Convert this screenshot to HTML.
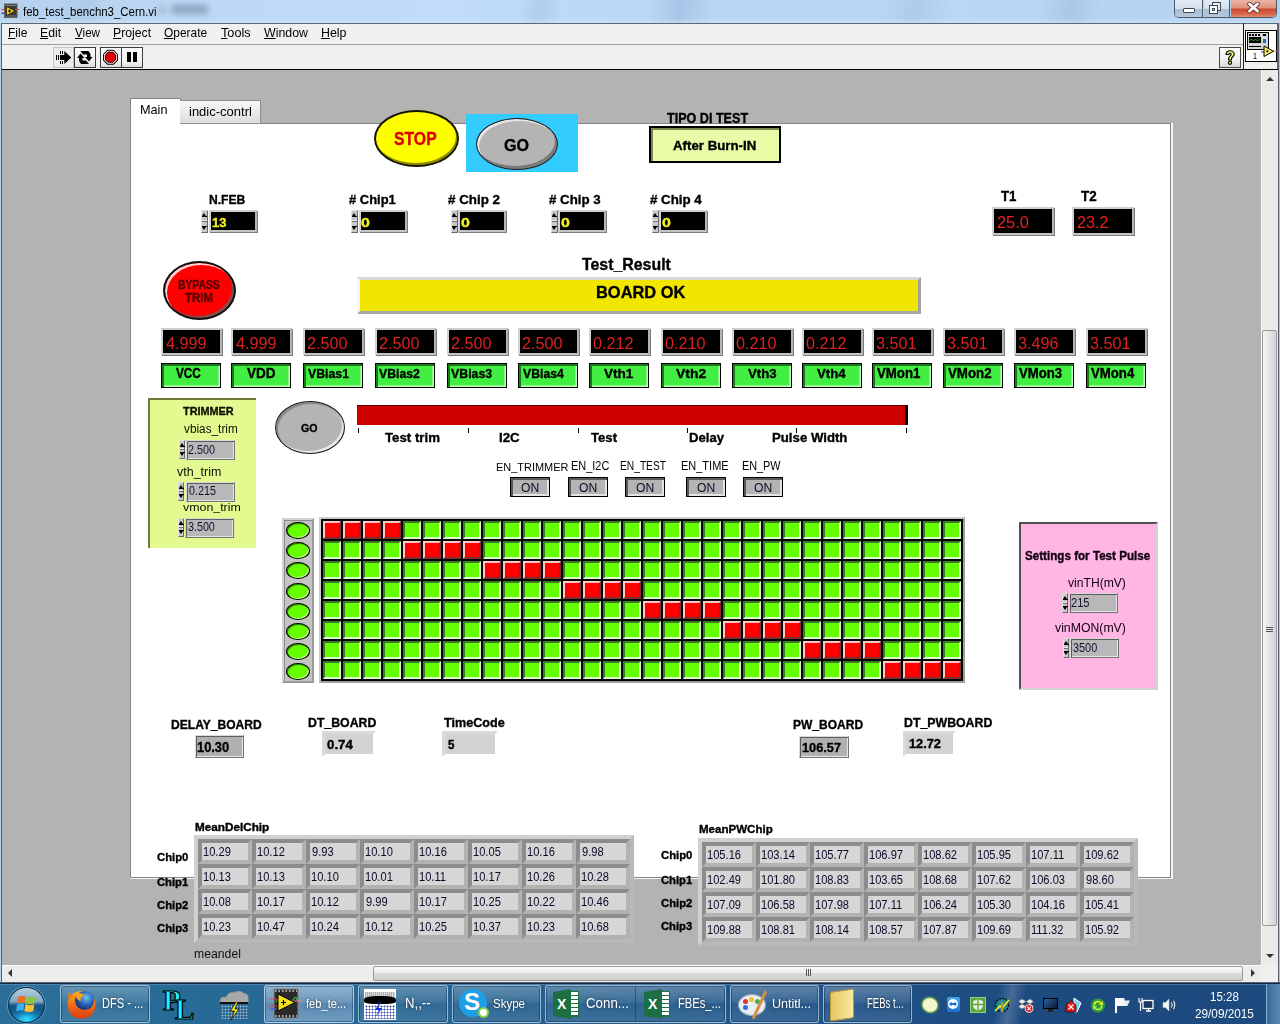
<!DOCTYPE html><html><head><meta charset="utf-8"><style>
*{box-sizing:border-box;margin:0;padding:0}
html,body{width:1280px;height:1024px;overflow:hidden;background:#b3b3b3;font-family:"Liberation Sans",sans-serif;}
.a{position:absolute}
.b{font-weight:bold}
.t{white-space:nowrap;line-height:1}
</style></head><body>
<div class="a" style="left:0px;top:0px;width:1280px;height:23px;background:linear-gradient(90deg,#b4d0ec 0%,#bcd8f4 15%,#c0dcf8 35%,#b8d6f4 55%,#bad8f6 75%,#b4d2f0 100%)"></div>
<div class="a" style="left:520px;top:0;width:40px;height:23px;background:linear-gradient(100deg,transparent 0%,rgba(60,100,150,0.1) 50%,transparent 100%)"></div>
<div class="a" style="left:650px;top:0;width:60px;height:23px;background:linear-gradient(100deg,transparent 0%,rgba(60,100,150,0.14) 50%,transparent 100%)"></div>
<div class="a" style="left:880px;top:0;width:70px;height:23px;background:linear-gradient(100deg,transparent 0%,rgba(60,100,150,0.1) 50%,transparent 100%)"></div>
<div class="a" style="left:1040px;top:0;width:60px;height:23px;background:linear-gradient(100deg,transparent 0%,rgba(60,100,150,0.12) 50%,transparent 100%)"></div>
<div class="a" style="left:60px;top:0;width:50px;height:23px;background:linear-gradient(100deg,transparent 0%,rgba(60,100,150,0.08) 50%,transparent 100%)"></div>
<div class="a" style="left:0px;top:18px;width:1280px;height:5px;background:linear-gradient(rgba(255,255,255,0),rgba(220,235,250,.45))"></div>
<div class="a" style="left:0px;top:23px;width:2px;height:961px;background:#b9d3ee;border-right:1px solid #56606c"></div>
<div class="a" style="left:1278px;top:23px;width:2px;height:961px;background:#a9c5e2;border-left:1px solid #56606c"></div>
<div class="a" style="left:0px;top:982px;width:1280px;height:2px;background:#a9c5e2;border-top:1px solid #56606c"></div>
<svg class="a" style="left:1px;top:3px" width="18" height="16" viewBox="0 0 18 16"><rect x="3.5" y="1" width="12.5" height="13.5" fill="#3a3a3a" stroke="#606060" stroke-width="1"/><path d="M4.5 2.5H15M4.5 13H15" stroke="#bbb" stroke-width="1" stroke-dasharray="1 1"/><path d="M0.5 6.5H5M0.5 10H5" stroke="#e03030" stroke-width="1.1"/><path d="M0.5 10.5H4" stroke="#3050d0" stroke-width="1.1"/><path d="M14 6.5H18" stroke="#e04040" stroke-width="1"/><path d="M5.5 3.5L14 8L5.5 12.5Z" fill="#f0d020" stroke="#000" stroke-width=".6"/><path d="M7 8H10M8.5 6.5V9.5" stroke="#000" stroke-width=".9"/></svg>
<div class="a t" style="left:23.23px;top:6.00px;font-size:12.83px;color:#000;transform:scaleX(0.892);transform-origin:0 0;">feb_test_benchn3_Cern.vi</div>
<div class="a" style="left:1174px;top:0px;width:103px;height:18px;border:1px solid #4a5868;border-top:none;border-radius:0 0 5px 5px;overflow:hidden"><div class="a" style="left:0;top:0;width:28px;height:17px;background:linear-gradient(#e4ecf4 0%,#d4e0ec 50%,#a8bed4 52%,#b4c8dc 100%);border-right:1px solid #4a5868"></div><div class="a" style="left:29px;top:0;width:26px;height:17px;background:linear-gradient(#e4ecf4 0%,#d4e0ec 50%,#a8bed4 52%,#b4c8dc 100%);border-right:1px solid #4a5868"></div><div class="a" style="left:56px;top:0;width:47px;height:17px;background:linear-gradient(#eab4a4 0%,#e0907c 48%,#c84830 52%,#d86a50 85%,#e89078 100%)"></div></div>
<div class="a" style="left:1183px;top:8px;width:12px;height:5px;background:#fff;border:1px solid #3a4858;border-radius:1px"></div>
<div class="a" style="left:1212px;top:2px;width:9px;height:9px;background:#e8eef4;border:1px solid #3a4858"></div>
<div class="a" style="left:1209px;top:5px;width:9px;height:9px;background:#fff;border:1px solid #3a4858"><div class="a" style="left:2px;top:2px;width:3px;height:3px;border:1px solid #3a4858"></div></div>
<svg class="a" style="left:1247px;top:2px" width="13" height="11" viewBox="0 0 13 11"><path d="M2.5 2L10.5 9M10.5 2L2.5 9" stroke="#6a3a30" stroke-width="4.6" stroke-linecap="round"/><path d="M2.5 2L10.5 9M10.5 2L2.5 9" stroke="#fff" stroke-width="2.8" stroke-linecap="round"/></svg>
<div class="a" style="left:172px;top:5px;width:36px;height:9px;background:#7e98b4;filter:blur(3px);opacity:.8"></div>
<div class="a" style="left:158px;top:6px;width:8px;height:8px;background:#90a8c0;filter:blur(3px);opacity:.6"></div>
<div class="a" style="left:2px;top:23px;width:1276px;height:22px;background:#f0f0f0;border-top:1px solid #5b6878"></div>
<div class="a t" style="left:8.44px;top:27.00px;font-size:12.14px;color:#000;transform:scaleX(0.988);transform-origin:0 0;"><u style="text-underline-offset:1px">F</u>ile</div>
<div class="a t" style="left:40.02px;top:27.00px;font-size:12.14px;color:#000;transform:scaleX(1.008);transform-origin:0 0;"><u style="text-underline-offset:1px">E</u>dit</div>
<div class="a t" style="left:74.94px;top:27.00px;font-size:12.14px;color:#000;transform:scaleX(0.960);transform-origin:0 0;"><u style="text-underline-offset:1px">V</u>iew</div>
<div class="a t" style="left:113.02px;top:27.00px;font-size:12.14px;color:#000;transform:scaleX(1.008);transform-origin:0 0;"><u style="text-underline-offset:1px">P</u>roject</div>
<div class="a t" style="left:164.46px;top:27.00px;font-size:12.57px;color:#000;transform:scaleX(0.949);transform-origin:0 0;"><u style="text-underline-offset:1px">O</u>perate</div>
<div class="a t" style="left:220.75px;top:27.00px;font-size:12.14px;color:#000;transform:scaleX(1.048);transform-origin:0 0;"><u style="text-underline-offset:1px">T</u>ools</div>
<div class="a t" style="left:263.94px;top:27.00px;font-size:12.14px;color:#000;transform:scaleX(1.020);transform-origin:0 0;"><u style="text-underline-offset:1px">W</u>indow</div>
<div class="a t" style="left:321.01px;top:27.00px;font-size:12.14px;color:#000;transform:scaleX(1.022);transform-origin:0 0;"><u style="text-underline-offset:1px">H</u>elp</div>
<div class="a" style="left:2px;top:44px;width:1241px;height:1px;background:#a0a0a0"></div>
<div class="a" style="left:2px;top:45px;width:1241px;height:24px;background:#f0f0f0"></div>
<div class="a" style="left:1243px;top:23px;width:1px;height:46px;background:#1a1a1a"></div>
<div class="a" style="left:1244px;top:23px;width:34px;height:46px;background:#f0f0f0;border-top:1px solid #5b6878;border-right:1px solid #5b6878"></div>
<div class="a" style="left:2px;top:69px;width:1276px;height:1px;background:#000"></div>
<div class="a" style="left:53px;top:47px;width:21px;height:21px;background:#ececec;border:1px solid #c4c4c4"></div>
<svg class="a" style="left:53px;top:47px" width="21" height="21" viewBox="0 0 21 21"><g fill="#000"><rect x="3" y="8" width="1" height="5"/><rect x="5" y="8" width="1" height="5"/><rect x="7" y="4" width="1" height="3"/><rect x="9" y="4" width="1" height="3"/><rect x="7" y="14" width="1" height="3"/><rect x="9" y="14" width="1" height="3"/><rect x="7" y="8" width="5" height="5"/><path d="M11.3 4L18.2 10.5L11.3 17Z"/></g></svg>
<div class="a" style="left:74px;top:47px;width:22px;height:21px;background:linear-gradient(#fafafa,#f0f0f0 70%,#dcdcdc);border:1px solid #3c3c3c"></div>
<svg class="a" style="left:74px;top:47px" width="22" height="21" viewBox="0 0 22 21"><g fill="#000"><path d="M6.5 4L14.5 4L16.5 7L16.5 10L18.5 10L15 14.5L11 10L13 10L13 7.5L9 7.5Z"/><path d="M15 17L7 17L5 14L5 11L3 11L6.5 6.5L10.5 11L8.5 11L8.5 13.5L12 13.5Z"/></g></svg>
<div class="a" style="left:100px;top:47px;width:22px;height:21px;background:linear-gradient(#fafafa,#f2f2f2 70%,#dedede);border:1px solid #3c3c3c"></div>
<svg class="a" style="left:100px;top:47px" width="22" height="21" viewBox="0 0 22 21"><path d="M17.98 13.40 L13.60 17.78 L7.40 17.78 L3.02 13.40 L3.02 7.20 L7.40 2.82 L13.60 2.82 L17.98 7.20Z" fill="#000"/><path d="M17.06 13.02 L13.22 16.86 L7.78 16.86 L3.94 13.02 L3.94 7.58 L7.78 3.74 L13.22 3.74 L17.06 7.58Z" fill="#f4e4e4"/><path d="M16.04 12.60 L12.80 15.84 L8.20 15.84 L4.96 12.60 L4.96 8.00 L8.20 4.76 L12.80 4.76 L16.04 8.00Z" fill="#300000"/><path d="M15.12 12.21 L12.41 14.92 L8.59 14.92 L5.88 12.21 L5.88 8.39 L8.59 5.68 L12.41 5.68 L15.12 8.39Z" fill="#e80000"/></svg>
<div class="a" style="left:121px;top:47px;width:22px;height:21px;background:linear-gradient(#fafafa,#f2f2f2 70%,#dedede);border:1px solid #3c3c3c"></div>
<div class="a" style="left:127px;top:52px;width:4px;height:10px;background:#000"></div>
<div class="a" style="left:133px;top:52px;width:4px;height:10px;background:#000"></div>
<div class="a" style="left:1219px;top:47px;width:22px;height:21px;background:linear-gradient(#fcfcfc,#f0f0f0 60%,#d8d8d8);border:1px solid #4a4a4a"></div>
<svg class="a" style="left:1223px;top:49px" width="14" height="17" viewBox="0 0 14 17"><path d="M3 5.5C3 3 5 1.8 7 1.8S11.2 3 11.2 5.2C11.2 7.4 8.4 8 8.4 10.3V11H5.6V10C5.6 7.3 8.2 6.8 8.2 5.3C8.2 4.5 7.7 4.2 7 4.2S5.8 4.6 5.8 5.5Z" fill="#f4f070" stroke="#000" stroke-width="1.1"/><circle cx="7" cy="13.8" r="1.6" fill="#f4f070" stroke="#000" stroke-width="1.1"/></svg>
<div class="a" style="left:1245px;top:30px;width:32px;height:32px;background:#fff;border:1px solid #000"></div>
<div class="a" style="left:1247px;top:32px;width:22px;height:18px;background:#d4d4d4;border:1px solid #000"></div>
<div class="a" style="left:1249px;top:34px;width:12px;height:2px;background:repeating-linear-gradient(90deg,#000 0 2px,transparent 2px 3px)"></div>
<div class="a" style="left:1263px;top:34px;width:3px;height:2px;background:#000"></div>
<div class="a" style="left:1249px;top:37px;width:12px;height:6px;background:#000"></div>
<svg class="a" style="left:1249px;top:37px" width="12" height="6" viewBox="0 0 12 6"><path d="M0.5 4L2.5 2L4.5 4L6.5 2L8.5 4L10.5 2" stroke="#30c030" stroke-width="0.9" fill="none"/></svg>
<div class="a" style="left:1263px;top:37px;width:3px;height:6px;background:#1a70d0;border-top:2px solid #e0e0e0"></div>
<div class="a" style="left:1249px;top:46px;width:12px;height:1px;background:#000"></div>
<div class="a t" style="left:1253.17px;top:51.00px;font-size:9.57px;color:#000;transform:scaleX(0.745);transform-origin:0 0;">1</div>
<svg class="a" style="left:1261px;top:45px" width="16" height="13" viewBox="0 0 16 13"><path d="M0 7H4" stroke="#2040c0" stroke-width="1"/><path d="M12 6H16" stroke="#d08060" stroke-width="1"/><path d="M3 1L12.5 6.3L3 11.5Z" fill="#f4f060" stroke="#000" stroke-width="1"/><circle cx="6.3" cy="6.3" r="1" fill="#000"/></svg>
<div class="a" style="left:1261px;top:70px;width:17px;height:895px;background:#eaeaea;border-left:1px solid #f8f8f8"></div>
<div class="a" style="left:1262px;top:330px;width:15px;height:596px;background:linear-gradient(90deg,#f6f6f6,#e2e2e2 60%,#cfcfd4);border:1px solid #9a9a9a;border-radius:2px"></div>
<div class="a" style="left:1266px;top:627px;width:7px;height:1px;background:#555;box-shadow:0 2px 0 #555,0 4px 0 #555"></div>
<div class="a" style="left:1266px;top:77px;width:0;height:0;border-left:4px solid transparent;border-right:4px solid transparent;border-bottom:4px solid #333"></div>
<div class="a" style="left:1266px;top:954px;width:0;height:0;border-left:4px solid transparent;border-right:4px solid transparent;border-top:4px solid #333"></div>
<div class="a" style="left:2px;top:965px;width:1259px;height:17px;background:#ececec;border-top:1px solid #fafafa"></div>
<div class="a" style="left:1261px;top:965px;width:17px;height:17px;background:#efefef"></div>
<div class="a" style="left:373px;top:966px;width:870px;height:15px;background:linear-gradient(#f8f8f8,#ededed 45%,#dadada 50%,#cfcfcf);border:1px solid #9a9a9a;border-radius:2px"></div>
<div class="a" style="left:806px;top:969px;width:1px;height:7px;background:#555;box-shadow:2px 0 0 #555,4px 0 0 #555"></div>
<div class="a" style="left:8px;top:969px;width:0;height:0;border-top:4px solid transparent;border-bottom:4px solid transparent;border-right:4px solid #333"></div>
<div class="a" style="left:1251px;top:969px;width:0;height:0;border-top:4px solid transparent;border-bottom:4px solid transparent;border-left:4px solid #333"></div>
<div class="a" style="left:0px;top:984px;width:1280px;height:40px;background:linear-gradient(#3a6f99,#245a85 50%,#1f5079)"></div>
<div class="a" style="left:130px;top:123px;width:1041px;height:755px;background:#fff;border:1px solid #858585"></div>
<div class="a" style="left:1171px;top:123px;width:2px;height:756px;background:#f4f4f4"></div>
<div class="a" style="left:130px;top:878px;width:1043px;height:1px;background:#f4f4f4"></div>
<div class="a" style="left:130px;top:98px;width:51px;height:26px;background:#fff;border:1px solid #858585;border-bottom:none"></div>
<div class="a t" style="left:139.69px;top:104.00px;font-size:12.34px;color:#000;transform:scaleX(1.027);transform-origin:0 0;">Main</div>
<div class="a" style="left:180px;top:100px;width:81px;height:24px;background:linear-gradient(#f6f6f6,#ececec 50%,#dcdcdc);border:1px solid #909090;border-left:none"></div>
<div class="a t" style="left:188.65px;top:106.00px;font-size:12.28px;color:#000;transform:scaleX(1.060);transform-origin:0 0;">indic-contrl</div>
<div class="a" style="left:374px;top:110px;width:85px;height:57px;border-radius:50%;background:#ffff00;border:2px solid #141400;box-shadow:inset -1px -2px 0 #8a8a00"></div>
<div class="a t" style="left:394.23px;top:131.00px;font-size:17.43px;font-weight:bold;-webkit-text-stroke:0.35px #e00000;color:#e00000;transform:scaleX(0.905);transform-origin:0 0;">STOP</div>
<div class="a" style="left:466px;top:114px;width:112px;height:58px;background:#33ccff"></div>
<div class="a" style="left:476px;top:118px;width:82px;height:52px;border-radius:50%;background:#b4b4b4;border:1.5px solid #1a1a1a;box-shadow:inset 2px 2px 0 #e8e8e8,inset -2px -3px 0 #7a7a7a"></div>
<div class="a t" style="left:504.11px;top:138.00px;font-size:16.00px;font-weight:bold;-webkit-text-stroke:0.35px #000;color:#000;transform:scaleX(1.006);transform-origin:0 0;">GO</div>
<div class="a t" style="left:667.37px;top:112.00px;font-size:13.71px;font-weight:bold;-webkit-text-stroke:0.35px #000;color:#000;transform:scaleX(0.918);transform-origin:0 0;">TIPO DI TEST</div>
<div class="a" style="left:649px;top:126px;width:132px;height:37px;background:#e8fca8;border:2px solid #000;box-shadow:inset 2px 2px 0 #7d8a50"></div>
<div class="a t" style="left:673.07px;top:139.00px;font-size:13.38px;font-weight:bold;-webkit-text-stroke:0.35px #000;color:#000;transform:scaleX(0.992);transform-origin:0 0;">After Burn-IN</div>
<div class="a t" style="left:209.01px;top:193.00px;font-size:13.48px;font-weight:bold;-webkit-text-stroke:0.35px #000;color:#000;transform:scaleX(0.899);transform-origin:0 0;">N.FEB</div>
<div class="a" style="left:201px;top:210px;width:7px;height:23px;background:#c8c8c8;border-style:solid;border-width:1px;border-color:#e0e0e0 #6a6a6a #6a6a6a #e0e0e0"></div>
<div class="a" style="left:202.0px;top:213px;width:0;height:0;border-left:2.5px solid transparent;border-right:2.5px solid transparent;border-bottom:3px solid #000"></div>
<div class="a" style="left:202.0px;top:216px;width:5px;height:1px;background:#000"></div>
<div class="a" style="left:202px;top:220px;width:5px;height:2px;background:#eaeaea;border-bottom:1px solid #707070"></div>
<div class="a" style="left:202.0px;top:226px;width:5px;height:1px;background:#000"></div>
<div class="a" style="left:202.0px;top:227px;width:0;height:0;border-left:2.5px solid transparent;border-right:2.5px solid transparent;border-top:3px solid #000"></div>
<div class="a" style="left:209px;top:210px;width:48px;height:22px;background:#000;border:2px solid;border-color:#cdcdcd #b4b4b4 #c4c4c4 #d4d4d4;box-shadow:1px 1px 0 #7c7c7c"></div>
<div class="a t" style="left:212.02px;top:216.00px;font-size:13.57px;font-weight:bold;-webkit-text-stroke:0.35px #f0f020;color:#f0f020;transform:scaleX(0.958);transform-origin:0 0;">13</div>
<div class="a t" style="left:349.31px;top:194.00px;font-size:12.83px;font-weight:bold;-webkit-text-stroke:0.35px #000;color:#000;transform:scaleX(1.010);transform-origin:0 0;"># Chip1</div>
<div class="a" style="left:351px;top:210px;width:7px;height:23px;background:#c8c8c8;border-style:solid;border-width:1px;border-color:#e0e0e0 #6a6a6a #6a6a6a #e0e0e0"></div>
<div class="a" style="left:352.0px;top:213px;width:0;height:0;border-left:2.5px solid transparent;border-right:2.5px solid transparent;border-bottom:3px solid #000"></div>
<div class="a" style="left:352.0px;top:216px;width:5px;height:1px;background:#000"></div>
<div class="a" style="left:352px;top:220px;width:5px;height:2px;background:#eaeaea;border-bottom:1px solid #707070"></div>
<div class="a" style="left:352.0px;top:226px;width:5px;height:1px;background:#000"></div>
<div class="a" style="left:352.0px;top:227px;width:0;height:0;border-left:2.5px solid transparent;border-right:2.5px solid transparent;border-top:3px solid #000"></div>
<div class="a" style="left:359px;top:210px;width:48px;height:22px;background:#000;border:2px solid;border-color:#cdcdcd #b4b4b4 #c4c4c4 #d4d4d4;box-shadow:1px 1px 0 #7c7c7c"></div>
<div class="a t" style="left:361.06px;top:216.00px;font-size:13.14px;font-weight:bold;-webkit-text-stroke:0.35px #f0f020;color:#f0f020;transform:scaleX(1.217);transform-origin:0 0;">0</div>
<div class="a t" style="left:447.50px;top:194.00px;font-size:12.83px;font-weight:bold;-webkit-text-stroke:0.35px #000;color:#000;transform:scaleX(1.043);transform-origin:0 0;"># Chip 2</div>
<div class="a" style="left:451px;top:210px;width:7px;height:23px;background:#c8c8c8;border-style:solid;border-width:1px;border-color:#e0e0e0 #6a6a6a #6a6a6a #e0e0e0"></div>
<div class="a" style="left:452.0px;top:213px;width:0;height:0;border-left:2.5px solid transparent;border-right:2.5px solid transparent;border-bottom:3px solid #000"></div>
<div class="a" style="left:452.0px;top:216px;width:5px;height:1px;background:#000"></div>
<div class="a" style="left:452px;top:220px;width:5px;height:2px;background:#eaeaea;border-bottom:1px solid #707070"></div>
<div class="a" style="left:452.0px;top:226px;width:5px;height:1px;background:#000"></div>
<div class="a" style="left:452.0px;top:227px;width:0;height:0;border-left:2.5px solid transparent;border-right:2.5px solid transparent;border-top:3px solid #000"></div>
<div class="a" style="left:458px;top:210px;width:48px;height:22px;background:#000;border:2px solid;border-color:#cdcdcd #b4b4b4 #c4c4c4 #d4d4d4;box-shadow:1px 1px 0 #7c7c7c"></div>
<div class="a t" style="left:460.76px;top:216.00px;font-size:13.14px;font-weight:bold;-webkit-text-stroke:0.35px #f0f020;color:#f0f020;transform:scaleX(1.217);transform-origin:0 0;">0</div>
<div class="a t" style="left:548.80px;top:194.00px;font-size:12.83px;font-weight:bold;-webkit-text-stroke:0.35px #000;color:#000;transform:scaleX(1.035);transform-origin:0 0;"># Chip 3</div>
<div class="a" style="left:551px;top:210px;width:7px;height:23px;background:#c8c8c8;border-style:solid;border-width:1px;border-color:#e0e0e0 #6a6a6a #6a6a6a #e0e0e0"></div>
<div class="a" style="left:552.0px;top:213px;width:0;height:0;border-left:2.5px solid transparent;border-right:2.5px solid transparent;border-bottom:3px solid #000"></div>
<div class="a" style="left:552.0px;top:216px;width:5px;height:1px;background:#000"></div>
<div class="a" style="left:552px;top:220px;width:5px;height:2px;background:#eaeaea;border-bottom:1px solid #707070"></div>
<div class="a" style="left:552.0px;top:226px;width:5px;height:1px;background:#000"></div>
<div class="a" style="left:552.0px;top:227px;width:0;height:0;border-left:2.5px solid transparent;border-right:2.5px solid transparent;border-top:3px solid #000"></div>
<div class="a" style="left:558px;top:210px;width:48px;height:22px;background:#000;border:2px solid;border-color:#cdcdcd #b4b4b4 #c4c4c4 #d4d4d4;box-shadow:1px 1px 0 #7c7c7c"></div>
<div class="a t" style="left:561.36px;top:216.00px;font-size:13.14px;font-weight:bold;-webkit-text-stroke:0.35px #f0f020;color:#f0f020;transform:scaleX(1.217);transform-origin:0 0;">0</div>
<div class="a t" style="left:650.30px;top:194.00px;font-size:12.83px;font-weight:bold;-webkit-text-stroke:0.35px #000;color:#000;transform:scaleX(1.037);transform-origin:0 0;"># Chip 4</div>
<div class="a" style="left:652px;top:210px;width:7px;height:23px;background:#c8c8c8;border-style:solid;border-width:1px;border-color:#e0e0e0 #6a6a6a #6a6a6a #e0e0e0"></div>
<div class="a" style="left:653.0px;top:213px;width:0;height:0;border-left:2.5px solid transparent;border-right:2.5px solid transparent;border-bottom:3px solid #000"></div>
<div class="a" style="left:653.0px;top:216px;width:5px;height:1px;background:#000"></div>
<div class="a" style="left:653px;top:220px;width:5px;height:2px;background:#eaeaea;border-bottom:1px solid #707070"></div>
<div class="a" style="left:653.0px;top:226px;width:5px;height:1px;background:#000"></div>
<div class="a" style="left:653.0px;top:227px;width:0;height:0;border-left:2.5px solid transparent;border-right:2.5px solid transparent;border-top:3px solid #000"></div>
<div class="a" style="left:659px;top:210px;width:48px;height:22px;background:#000;border:2px solid;border-color:#cdcdcd #b4b4b4 #c4c4c4 #d4d4d4;box-shadow:1px 1px 0 #7c7c7c"></div>
<div class="a t" style="left:661.86px;top:216.00px;font-size:13.14px;font-weight:bold;-webkit-text-stroke:0.35px #f0f020;color:#f0f020;transform:scaleX(1.217);transform-origin:0 0;">0</div>
<div class="a t" style="left:1000.87px;top:189.00px;font-size:14.13px;font-weight:bold;-webkit-text-stroke:0.35px #000;color:#000;transform:scaleX(0.939);transform-origin:0 0;">T1</div>
<div class="a t" style="left:1080.87px;top:190.00px;font-size:13.93px;font-weight:bold;-webkit-text-stroke:0.35px #000;color:#000;transform:scaleX(0.966);transform-origin:0 0;">T2</div>
<div class="a" style="left:992px;top:207px;width:62px;height:28px;background:#000;border:2px solid;border-color:#cdcdcd #b4b4b4 #c4c4c4 #d4d4d4;box-shadow:1px 1px 0 #7c7c7c"></div>
<div class="a" style="left:1072px;top:207px;width:62px;height:28px;background:#000;border:2px solid;border-color:#cdcdcd #b4b4b4 #c4c4c4 #d4d4d4;box-shadow:1px 1px 0 #7c7c7c"></div>
<div class="a t" style="left:996.68px;top:214.00px;font-size:16.43px;color:#e82020;transform:scaleX(0.998);transform-origin:0 0;">25.0</div>
<div class="a t" style="left:1076.69px;top:214.00px;font-size:16.43px;color:#e82020;transform:scaleX(0.990);transform-origin:0 0;">23.2</div>
<div class="a" style="left:163px;top:261px;width:73px;height:59px;border-radius:50%;background:#ff0000;border:2px solid #101010;box-shadow:inset 2px 2px 0 #ffd0d0,inset -2px -2px 0 #7a5050"></div>
<div class="a t" style="left:178.03px;top:279.00px;font-size:12.43px;font-weight:bold;-webkit-text-stroke:0.35px #500000;color:#500000;transform:scaleX(0.832);transform-origin:0 0;">BYPASS</div>
<div class="a t" style="left:184.89px;top:292.00px;font-size:12.90px;font-weight:bold;-webkit-text-stroke:0.35px #500000;color:#500000;transform:scaleX(0.885);transform-origin:0 0;">TRIM</div>
<div class="a t" style="left:582.34px;top:256.00px;font-size:16.14px;font-weight:bold;-webkit-text-stroke:0.35px #000;color:#000;transform:scaleX(0.985);transform-origin:0 0;">Test_Result</div>
<div class="a" style="left:357px;top:277px;width:564px;height:37px;background:#f0e600;border:3px solid #c8c8c8;border-left-color:#f4f4f4;border-top-color:#d8d8d8;border-right-color:#a0a0a0;border-bottom-color:#a8a8a8"></div>
<div class="a t" style="left:595.83px;top:285.00px;font-size:16.86px;font-weight:bold;-webkit-text-stroke:0.35px #000;color:#000;transform:scaleX(0.974);transform-origin:0 0;">BOARD OK</div>
<div class="a" style="left:161px;top:328px;width:61px;height:27px;background:#000;border:2px solid;border-color:#cdcdcd #b4b4b4 #c4c4c4 #d4d4d4;box-shadow:1px 1px 0 #7c7c7c"></div>
<div class="a t" style="left:165.68px;top:336.00px;font-size:16.71px;color:#dc2020;transform:scaleX(0.971);transform-origin:0 0;">4.999</div>
<div class="a" style="left:161px;top:363px;width:60px;height:25px;background:#42ee42;border:1.5px solid #000;box-shadow:inset 2px 2px 0 #1a7a1a,inset -1.5px -1.5px 0 #c0ffc0"></div>
<div class="a t" style="left:176.14px;top:367.00px;font-size:13.71px;font-weight:bold;-webkit-text-stroke:0.35px #000;color:#000;transform:scaleX(0.859);transform-origin:0 0;">VCC</div>
<div class="a" style="left:231px;top:328px;width:61px;height:27px;background:#000;border:2px solid;border-color:#cdcdcd #b4b4b4 #c4c4c4 #d4d4d4;box-shadow:1px 1px 0 #7c7c7c"></div>
<div class="a t" style="left:235.68px;top:336.00px;font-size:16.71px;color:#dc2020;transform:scaleX(0.971);transform-origin:0 0;">4.999</div>
<div class="a" style="left:231px;top:363px;width:60px;height:25px;background:#42ee42;border:1.5px solid #000;box-shadow:inset 2px 2px 0 #1a7a1a,inset -1.5px -1.5px 0 #c0ffc0"></div>
<div class="a t" style="left:246.53px;top:367.00px;font-size:13.91px;font-weight:bold;-webkit-text-stroke:0.35px #000;color:#000;transform:scaleX(0.971);transform-origin:0 0;">VDD</div>
<div class="a" style="left:303px;top:328px;width:61px;height:27px;background:#000;border:2px solid;border-color:#cdcdcd #b4b4b4 #c4c4c4 #d4d4d4;box-shadow:1px 1px 0 #7c7c7c"></div>
<div class="a t" style="left:307.19px;top:336.00px;font-size:16.71px;color:#dc2020;transform:scaleX(0.971);transform-origin:0 0;">2.500</div>
<div class="a" style="left:303px;top:363px;width:60px;height:25px;background:#42ee42;border:1.5px solid #000;box-shadow:inset 2px 2px 0 #1a7a1a,inset -1.5px -1.5px 0 #c0ffc0"></div>
<div class="a t" style="left:308.04px;top:367.00px;font-size:13.24px;font-weight:bold;-webkit-text-stroke:0.35px #000;color:#000;transform:scaleX(0.929);transform-origin:0 0;">VBias1</div>
<div class="a" style="left:375px;top:328px;width:61px;height:27px;background:#000;border:2px solid;border-color:#cdcdcd #b4b4b4 #c4c4c4 #d4d4d4;box-shadow:1px 1px 0 #7c7c7c"></div>
<div class="a t" style="left:379.19px;top:336.00px;font-size:16.71px;color:#dc2020;transform:scaleX(0.971);transform-origin:0 0;">2.500</div>
<div class="a" style="left:375px;top:363px;width:60px;height:25px;background:#42ee42;border:1.5px solid #000;box-shadow:inset 2px 2px 0 #1a7a1a,inset -1.5px -1.5px 0 #c0ffc0"></div>
<div class="a t" style="left:379.44px;top:367.00px;font-size:13.24px;font-weight:bold;-webkit-text-stroke:0.35px #000;color:#000;transform:scaleX(0.927);transform-origin:0 0;">VBias2</div>
<div class="a" style="left:447px;top:328px;width:61px;height:27px;background:#000;border:2px solid;border-color:#cdcdcd #b4b4b4 #c4c4c4 #d4d4d4;box-shadow:1px 1px 0 #7c7c7c"></div>
<div class="a t" style="left:451.19px;top:336.00px;font-size:16.71px;color:#dc2020;transform:scaleX(0.971);transform-origin:0 0;">2.500</div>
<div class="a" style="left:447px;top:363px;width:60px;height:25px;background:#42ee42;border:1.5px solid #000;box-shadow:inset 2px 2px 0 #1a7a1a,inset -1.5px -1.5px 0 #c0ffc0"></div>
<div class="a t" style="left:450.94px;top:367.00px;font-size:13.24px;font-weight:bold;-webkit-text-stroke:0.35px #000;color:#000;transform:scaleX(0.933);transform-origin:0 0;">VBias3</div>
<div class="a" style="left:518px;top:328px;width:61px;height:27px;background:#000;border:2px solid;border-color:#cdcdcd #b4b4b4 #c4c4c4 #d4d4d4;box-shadow:1px 1px 0 #7c7c7c"></div>
<div class="a t" style="left:522.19px;top:336.00px;font-size:16.71px;color:#dc2020;transform:scaleX(0.971);transform-origin:0 0;">2.500</div>
<div class="a" style="left:518px;top:363px;width:60px;height:25px;background:#42ee42;border:1.5px solid #000;box-shadow:inset 2px 2px 0 #1a7a1a,inset -1.5px -1.5px 0 #c0ffc0"></div>
<div class="a t" style="left:522.64px;top:367.00px;font-size:13.24px;font-weight:bold;-webkit-text-stroke:0.35px #000;color:#000;transform:scaleX(0.924);transform-origin:0 0;">VBias4</div>
<div class="a" style="left:589px;top:328px;width:61px;height:27px;background:#000;border:2px solid;border-color:#cdcdcd #b4b4b4 #c4c4c4 #d4d4d4;box-shadow:1px 1px 0 #7c7c7c"></div>
<div class="a t" style="left:593.35px;top:336.00px;font-size:16.71px;color:#dc2020;transform:scaleX(0.971);transform-origin:0 0;">0.212</div>
<div class="a" style="left:589px;top:363px;width:60px;height:25px;background:#42ee42;border:1.5px solid #000;box-shadow:inset 2px 2px 0 #1a7a1a,inset -1.5px -1.5px 0 #c0ffc0"></div>
<div class="a t" style="left:604.13px;top:367.00px;font-size:13.24px;font-weight:bold;-webkit-text-stroke:0.35px #000;color:#000;transform:scaleX(1.026);transform-origin:0 0;">Vth1</div>
<div class="a" style="left:661px;top:328px;width:61px;height:27px;background:#000;border:2px solid;border-color:#cdcdcd #b4b4b4 #c4c4c4 #d4d4d4;box-shadow:1px 1px 0 #7c7c7c"></div>
<div class="a t" style="left:665.35px;top:336.00px;font-size:16.71px;color:#dc2020;transform:scaleX(0.971);transform-origin:0 0;">0.210</div>
<div class="a" style="left:661px;top:363px;width:60px;height:25px;background:#42ee42;border:1.5px solid #000;box-shadow:inset 2px 2px 0 #1a7a1a,inset -1.5px -1.5px 0 #c0ffc0"></div>
<div class="a t" style="left:675.83px;top:367.00px;font-size:13.24px;font-weight:bold;-webkit-text-stroke:0.35px #000;color:#000;transform:scaleX(1.051);transform-origin:0 0;">Vth2</div>
<div class="a" style="left:732px;top:328px;width:61px;height:27px;background:#000;border:2px solid;border-color:#cdcdcd #b4b4b4 #c4c4c4 #d4d4d4;box-shadow:1px 1px 0 #7c7c7c"></div>
<div class="a t" style="left:736.35px;top:336.00px;font-size:16.71px;color:#dc2020;transform:scaleX(0.971);transform-origin:0 0;">0.210</div>
<div class="a" style="left:732px;top:363px;width:60px;height:25px;background:#42ee42;border:1.5px solid #000;box-shadow:inset 2px 2px 0 #1a7a1a,inset -1.5px -1.5px 0 #c0ffc0"></div>
<div class="a t" style="left:747.53px;top:367.00px;font-size:13.24px;font-weight:bold;-webkit-text-stroke:0.35px #000;color:#000;transform:scaleX(0.999);transform-origin:0 0;">Vth3</div>
<div class="a" style="left:802px;top:328px;width:61px;height:27px;background:#000;border:2px solid;border-color:#cdcdcd #b4b4b4 #c4c4c4 #d4d4d4;box-shadow:1px 1px 0 #7c7c7c"></div>
<div class="a t" style="left:806.35px;top:336.00px;font-size:16.71px;color:#dc2020;transform:scaleX(0.971);transform-origin:0 0;">0.212</div>
<div class="a" style="left:802px;top:363px;width:60px;height:25px;background:#42ee42;border:1.5px solid #000;box-shadow:inset 2px 2px 0 #1a7a1a,inset -1.5px -1.5px 0 #c0ffc0"></div>
<div class="a t" style="left:817.33px;top:367.00px;font-size:13.24px;font-weight:bold;-webkit-text-stroke:0.35px #000;color:#000;transform:scaleX(1.002);transform-origin:0 0;">Vth4</div>
<div class="a" style="left:872px;top:328px;width:61px;height:27px;background:#000;border:2px solid;border-color:#cdcdcd #b4b4b4 #c4c4c4 #d4d4d4;box-shadow:1px 1px 0 #7c7c7c"></div>
<div class="a t" style="left:876.35px;top:336.00px;font-size:16.71px;color:#dc2020;transform:scaleX(0.971);transform-origin:0 0;">3.501</div>
<div class="a" style="left:872px;top:363px;width:60px;height:25px;background:#42ee42;border:1.5px solid #000;box-shadow:inset 2px 2px 0 #1a7a1a,inset -1.5px -1.5px 0 #c0ffc0"></div>
<div class="a t" style="left:877.43px;top:367.00px;font-size:13.91px;font-weight:bold;-webkit-text-stroke:0.35px #000;color:#000;transform:scaleX(0.952);transform-origin:0 0;">VMon1</div>
<div class="a" style="left:943px;top:328px;width:61px;height:27px;background:#000;border:2px solid;border-color:#cdcdcd #b4b4b4 #c4c4c4 #d4d4d4;box-shadow:1px 1px 0 #7c7c7c"></div>
<div class="a t" style="left:947.35px;top:336.00px;font-size:16.71px;color:#dc2020;transform:scaleX(0.971);transform-origin:0 0;">3.501</div>
<div class="a" style="left:943px;top:363px;width:60px;height:25px;background:#42ee42;border:1.5px solid #000;box-shadow:inset 2px 2px 0 #1a7a1a,inset -1.5px -1.5px 0 #c0ffc0"></div>
<div class="a t" style="left:947.63px;top:367.00px;font-size:13.71px;font-weight:bold;-webkit-text-stroke:0.35px #000;color:#000;transform:scaleX(0.971);transform-origin:0 0;">VMon2</div>
<div class="a" style="left:1014px;top:328px;width:61px;height:27px;background:#000;border:2px solid;border-color:#cdcdcd #b4b4b4 #c4c4c4 #d4d4d4;box-shadow:1px 1px 0 #7c7c7c"></div>
<div class="a t" style="left:1018.35px;top:336.00px;font-size:16.71px;color:#dc2020;transform:scaleX(0.971);transform-origin:0 0;">3.496</div>
<div class="a" style="left:1014px;top:363px;width:60px;height:25px;background:#42ee42;border:1.5px solid #000;box-shadow:inset 2px 2px 0 #1a7a1a,inset -1.5px -1.5px 0 #c0ffc0"></div>
<div class="a t" style="left:1018.93px;top:367.00px;font-size:13.71px;font-weight:bold;-webkit-text-stroke:0.35px #000;color:#000;transform:scaleX(0.960);transform-origin:0 0;">VMon3</div>
<div class="a" style="left:1086px;top:328px;width:61px;height:27px;background:#000;border:2px solid;border-color:#cdcdcd #b4b4b4 #c4c4c4 #d4d4d4;box-shadow:1px 1px 0 #7c7c7c"></div>
<div class="a t" style="left:1090.35px;top:336.00px;font-size:16.71px;color:#dc2020;transform:scaleX(0.971);transform-origin:0 0;">3.501</div>
<div class="a" style="left:1086px;top:363px;width:60px;height:25px;background:#42ee42;border:1.5px solid #000;box-shadow:inset 2px 2px 0 #1a7a1a,inset -1.5px -1.5px 0 #c0ffc0"></div>
<div class="a t" style="left:1091.43px;top:367.00px;font-size:13.91px;font-weight:bold;-webkit-text-stroke:0.35px #000;color:#000;transform:scaleX(0.949);transform-origin:0 0;">VMon4</div>
<div class="a" style="left:148px;top:398px;width:108px;height:150px;background:#e2fa90;border-left:2px solid #6e7a3a;border-top:2px solid #6e7a3a"></div>
<div class="a t" style="left:183.49px;top:406.00px;font-size:11.16px;font-weight:bold;-webkit-text-stroke:0.35px #101000;color:#101000;transform:scaleX(0.974);transform-origin:0 0;">TRIMMER</div>
<div class="a t" style="left:184.44px;top:423.00px;font-size:12.28px;color:#101000;transform:scaleX(0.962);transform-origin:0 0;">vbias_trim</div>
<div class="a" style="left:179px;top:440px;width:6px;height:19px;background:#c8c8c8;border-style:solid;border-width:1px;border-color:#e0e0e0 #6a6a6a #6a6a6a #e0e0e0"></div>
<div class="a" style="left:179.5px;top:443px;width:0;height:0;border-left:2.5px solid transparent;border-right:2.5px solid transparent;border-bottom:3px solid #000"></div>
<div class="a" style="left:179.5px;top:446px;width:5px;height:1px;background:#000"></div>
<div class="a" style="left:180px;top:448px;width:4px;height:2px;background:#eaeaea;border-bottom:1px solid #707070"></div>
<div class="a" style="left:179.5px;top:452px;width:5px;height:1px;background:#000"></div>
<div class="a" style="left:179.5px;top:453px;width:0;height:0;border-left:2.5px solid transparent;border-right:2.5px solid transparent;border-top:3px solid #000"></div>
<div class="a" style="left:186px;top:440px;width:49px;height:20px;background:#b8b8b8;border-style:solid;border-width:1px;border-color:#d8d8d8 #747474 #747474 #d8d8d8;box-shadow:inset 1px 1px 0 #5e5e5e,inset -1px -1px 0 #e6e6e6"></div>
<div class="a t" style="left:188.46px;top:444.00px;font-size:12.29px;color:#101030;transform:scaleX(0.876);transform-origin:0 0;">2.500</div>
<div class="a t" style="left:176.94px;top:466.00px;font-size:12.41px;color:#101000;transform:scaleX(1.006);transform-origin:0 0;">vth_trim</div>
<div class="a" style="left:178px;top:482px;width:6px;height:19px;background:#c8c8c8;border-style:solid;border-width:1px;border-color:#e0e0e0 #6a6a6a #6a6a6a #e0e0e0"></div>
<div class="a" style="left:178.5px;top:485px;width:0;height:0;border-left:2.5px solid transparent;border-right:2.5px solid transparent;border-bottom:3px solid #000"></div>
<div class="a" style="left:178.5px;top:488px;width:5px;height:1px;background:#000"></div>
<div class="a" style="left:179px;top:490px;width:4px;height:2px;background:#eaeaea;border-bottom:1px solid #707070"></div>
<div class="a" style="left:178.5px;top:494px;width:5px;height:1px;background:#000"></div>
<div class="a" style="left:178.5px;top:495px;width:0;height:0;border-left:2.5px solid transparent;border-right:2.5px solid transparent;border-top:3px solid #000"></div>
<div class="a" style="left:186px;top:482px;width:49px;height:20px;background:#b8b8b8;border-style:solid;border-width:1px;border-color:#d8d8d8 #747474 #747474 #d8d8d8;box-shadow:inset 1px 1px 0 #5e5e5e,inset -1px -1px 0 #e6e6e6"></div>
<div class="a t" style="left:188.57px;top:485.00px;font-size:12.29px;color:#101030;transform:scaleX(0.874);transform-origin:0 0;">0.215</div>
<div class="a t" style="left:183.44px;top:501.00px;font-size:11.72px;color:#101000;transform:scaleX(1.057);transform-origin:0 0;">vmon_trim</div>
<div class="a" style="left:178px;top:518px;width:6px;height:19px;background:#c8c8c8;border-style:solid;border-width:1px;border-color:#e0e0e0 #6a6a6a #6a6a6a #e0e0e0"></div>
<div class="a" style="left:178.5px;top:521px;width:0;height:0;border-left:2.5px solid transparent;border-right:2.5px solid transparent;border-bottom:3px solid #000"></div>
<div class="a" style="left:178.5px;top:524px;width:5px;height:1px;background:#000"></div>
<div class="a" style="left:179px;top:526px;width:4px;height:2px;background:#eaeaea;border-bottom:1px solid #707070"></div>
<div class="a" style="left:178.5px;top:530px;width:5px;height:1px;background:#000"></div>
<div class="a" style="left:178.5px;top:531px;width:0;height:0;border-left:2.5px solid transparent;border-right:2.5px solid transparent;border-top:3px solid #000"></div>
<div class="a" style="left:185px;top:518px;width:49px;height:20px;background:#b8b8b8;border-style:solid;border-width:1px;border-color:#d8d8d8 #747474 #747474 #d8d8d8;box-shadow:inset 1px 1px 0 #5e5e5e,inset -1px -1px 0 #e6e6e6"></div>
<div class="a t" style="left:187.57px;top:521.00px;font-size:12.29px;color:#101030;transform:scaleX(0.873);transform-origin:0 0;">3.500</div>
<div class="a" style="left:275px;top:401px;width:70px;height:53px;border-radius:50%;background:#b4b4b4;border:1.5px solid #1a1a1a;box-shadow:inset 2px 2px 0 #8a8a8a,inset -2px -2px 0 #e8e8e8"></div>
<div class="a t" style="left:300.87px;top:423.00px;font-size:10.57px;font-weight:bold;-webkit-text-stroke:0.35px #000;color:#000;transform:scaleX(1.007);transform-origin:0 0;">GO</div>
<div class="a" style="left:357px;top:405px;width:551px;height:20px;background:#cc0000;border-top:1px solid #600000;border-right:3px solid #100000"></div>
<div class="a" style="left:358px;top:428px;width:1px;height:5px;background:#000"></div>
<div class="a" style="left:468px;top:428px;width:1px;height:5px;background:#000"></div>
<div class="a" style="left:578px;top:428px;width:1px;height:5px;background:#000"></div>
<div class="a" style="left:687px;top:428px;width:1px;height:5px;background:#000"></div>
<div class="a" style="left:796px;top:428px;width:1px;height:5px;background:#000"></div>
<div class="a" style="left:906px;top:428px;width:1px;height:5px;background:#000"></div>
<div class="a t" style="left:385.17px;top:432.00px;font-size:12.97px;font-weight:bold;-webkit-text-stroke:0.35px #000;color:#000;transform:scaleX(1.021);transform-origin:0 0;">Test trim</div>
<div class="a t" style="left:498.63px;top:431.00px;font-size:13.43px;font-weight:bold;-webkit-text-stroke:0.35px #000;color:#000;transform:scaleX(0.991);transform-origin:0 0;">I2C</div>
<div class="a t" style="left:591.37px;top:431.00px;font-size:13.62px;font-weight:bold;-webkit-text-stroke:0.35px #000;color:#000;transform:scaleX(0.966);transform-origin:0 0;">Test</div>
<div class="a t" style="left:688.95px;top:432.00px;font-size:12.97px;font-weight:bold;-webkit-text-stroke:0.35px #000;color:#000;transform:scaleX(1.011);transform-origin:0 0;">Delay</div>
<div class="a t" style="left:771.64px;top:432.00px;font-size:12.97px;font-weight:bold;-webkit-text-stroke:0.35px #000;color:#000;transform:scaleX(1.018);transform-origin:0 0;">Pulse Width</div>
<div class="a t" style="left:495.72px;top:461.00px;font-size:11.74px;color:#000;transform:scaleX(0.934);transform-origin:0 0;">EN_TRIMMER</div>
<div class="a" style="left:510px;top:477px;width:40px;height:20px;background:#b4b4b4;border:1px solid #000;box-shadow:inset 2px 2px 0 #5a5a5a,inset -2px -2px 0 #e4e4e4"></div>
<div class="a t" style="left:521.10px;top:482.00px;font-size:12.29px;color:#0a0a28;transform:scaleX(0.989);transform-origin:0 0;">ON</div>
<div class="a t" style="left:571.13px;top:460.00px;font-size:12.29px;color:#000;transform:scaleX(0.890);transform-origin:0 0;">EN_I2C</div>
<div class="a" style="left:568px;top:477px;width:40px;height:20px;background:#b4b4b4;border:1px solid #000;box-shadow:inset 2px 2px 0 #5a5a5a,inset -2px -2px 0 #e4e4e4"></div>
<div class="a t" style="left:579.10px;top:482.00px;font-size:12.29px;color:#0a0a28;transform:scaleX(0.989);transform-origin:0 0;">ON</div>
<div class="a t" style="left:620.18px;top:460.00px;font-size:12.29px;color:#000;transform:scaleX(0.832);transform-origin:0 0;">EN_TEST</div>
<div class="a" style="left:625px;top:477px;width:40px;height:20px;background:#b4b4b4;border:1px solid #000;box-shadow:inset 2px 2px 0 #5a5a5a,inset -2px -2px 0 #e4e4e4"></div>
<div class="a t" style="left:636.10px;top:482.00px;font-size:12.29px;color:#0a0a28;transform:scaleX(0.989);transform-origin:0 0;">ON</div>
<div class="a t" style="left:681.12px;top:460.00px;font-size:12.46px;color:#000;transform:scaleX(0.882);transform-origin:0 0;">EN_TIME</div>
<div class="a" style="left:686px;top:477px;width:40px;height:20px;background:#b4b4b4;border:1px solid #000;box-shadow:inset 2px 2px 0 #5a5a5a,inset -2px -2px 0 #e4e4e4"></div>
<div class="a t" style="left:697.10px;top:482.00px;font-size:12.29px;color:#0a0a28;transform:scaleX(0.989);transform-origin:0 0;">ON</div>
<div class="a t" style="left:741.93px;top:460.00px;font-size:12.46px;color:#000;transform:scaleX(0.872);transform-origin:0 0;">EN_PW</div>
<div class="a" style="left:743px;top:477px;width:40px;height:20px;background:#b4b4b4;border:1px solid #000;box-shadow:inset 2px 2px 0 #5a5a5a,inset -2px -2px 0 #e4e4e4"></div>
<div class="a t" style="left:754.10px;top:482.00px;font-size:12.29px;color:#0a0a28;transform:scaleX(0.989);transform-origin:0 0;">ON</div>
<div class="a" style="left:1019px;top:522px;width:139px;height:168px;background:#ffb6e4;border:2px solid #d4d4d4;border-top-color:#505050;border-left-color:#505050"></div>
<div class="a t" style="left:1025.05px;top:550.00px;font-size:12.41px;font-weight:bold;-webkit-text-stroke:0.35px #100010;color:#100010;transform:scaleX(0.938);transform-origin:0 0;">Settings for Test Pulse</div>
<div class="a t" style="left:1068.14px;top:577.00px;font-size:12.55px;color:#100010;transform:scaleX(0.966);transform-origin:0 0;">vinTH(mV)</div>
<div class="a" style="left:1062px;top:593px;width:6px;height:20px;background:#c8c8c8;border-style:solid;border-width:1px;border-color:#e0e0e0 #6a6a6a #6a6a6a #e0e0e0"></div>
<div class="a" style="left:1062.5px;top:596px;width:0;height:0;border-left:2.5px solid transparent;border-right:2.5px solid transparent;border-bottom:3px solid #000"></div>
<div class="a" style="left:1062.5px;top:599px;width:5px;height:1px;background:#000"></div>
<div class="a" style="left:1063px;top:602px;width:4px;height:2px;background:#eaeaea;border-bottom:1px solid #707070"></div>
<div class="a" style="left:1062.5px;top:606px;width:5px;height:1px;background:#000"></div>
<div class="a" style="left:1062.5px;top:607px;width:0;height:0;border-left:2.5px solid transparent;border-right:2.5px solid transparent;border-top:3px solid #000"></div>
<div class="a" style="left:1069px;top:593px;width:49px;height:20px;background:#b8b8b8;border-style:solid;border-width:1px;border-color:#d8d8d8 #747474 #747474 #d8d8d8;box-shadow:inset 1px 1px 0 #5e5e5e,inset -1px -1px 0 #e6e6e6"></div>
<div class="a t" style="left:1071.44px;top:596.00px;font-size:13.00px;color:#101030;transform:scaleX(0.855);transform-origin:0 0;">215</div>
<div class="a t" style="left:1055.14px;top:622.00px;font-size:12.55px;color:#100010;transform:scaleX(0.978);transform-origin:0 0;">vinMON(mV)</div>
<div class="a" style="left:1063px;top:638px;width:6px;height:20px;background:#c8c8c8;border-style:solid;border-width:1px;border-color:#e0e0e0 #6a6a6a #6a6a6a #e0e0e0"></div>
<div class="a" style="left:1063.5px;top:641px;width:0;height:0;border-left:2.5px solid transparent;border-right:2.5px solid transparent;border-bottom:3px solid #000"></div>
<div class="a" style="left:1063.5px;top:644px;width:5px;height:1px;background:#000"></div>
<div class="a" style="left:1064px;top:647px;width:4px;height:2px;background:#eaeaea;border-bottom:1px solid #707070"></div>
<div class="a" style="left:1063.5px;top:651px;width:5px;height:1px;background:#000"></div>
<div class="a" style="left:1063.5px;top:652px;width:0;height:0;border-left:2.5px solid transparent;border-right:2.5px solid transparent;border-top:3px solid #000"></div>
<div class="a" style="left:1070px;top:638px;width:49px;height:20px;background:#b8b8b8;border-style:solid;border-width:1px;border-color:#d8d8d8 #747474 #747474 #d8d8d8;box-shadow:inset 1px 1px 0 #5e5e5e,inset -1px -1px 0 #e6e6e6"></div>
<div class="a t" style="left:1072.56px;top:642.00px;font-size:12.57px;color:#101030;transform:scaleX(0.866);transform-origin:0 0;">3500</div>
<div class="a" style="left:282px;top:518px;width:32px;height:165px;background:#c4c4c4;border:2px solid #d4d4d4;border-right-color:#9a9a9a;border-bottom-color:#9a9a9a;box-shadow:inset 1px 1px 0 #8a8a8a"></div>
<div class="a" style="left:286px;top:522.0px;width:24px;height:17px;border-radius:50%;background:#66ff00;border:1.3px solid #000;box-shadow:inset 1px 1px 0 #2a8a00,inset -1px -1px 0 #c8ffa0"></div>
<div class="a" style="left:286px;top:542.2px;width:24px;height:17px;border-radius:50%;background:#66ff00;border:1.3px solid #000;box-shadow:inset 1px 1px 0 #2a8a00,inset -1px -1px 0 #c8ffa0"></div>
<div class="a" style="left:286px;top:562.4px;width:24px;height:17px;border-radius:50%;background:#66ff00;border:1.3px solid #000;box-shadow:inset 1px 1px 0 #2a8a00,inset -1px -1px 0 #c8ffa0"></div>
<div class="a" style="left:286px;top:582.6px;width:24px;height:17px;border-radius:50%;background:#66ff00;border:1.3px solid #000;box-shadow:inset 1px 1px 0 #2a8a00,inset -1px -1px 0 #c8ffa0"></div>
<div class="a" style="left:286px;top:602.8px;width:24px;height:17px;border-radius:50%;background:#66ff00;border:1.3px solid #000;box-shadow:inset 1px 1px 0 #2a8a00,inset -1px -1px 0 #c8ffa0"></div>
<div class="a" style="left:286px;top:623.0px;width:24px;height:17px;border-radius:50%;background:#66ff00;border:1.3px solid #000;box-shadow:inset 1px 1px 0 #2a8a00,inset -1px -1px 0 #c8ffa0"></div>
<div class="a" style="left:286px;top:643.2px;width:24px;height:17px;border-radius:50%;background:#66ff00;border:1.3px solid #000;box-shadow:inset 1px 1px 0 #2a8a00,inset -1px -1px 0 #c8ffa0"></div>
<div class="a" style="left:286px;top:663.4px;width:24px;height:17px;border-radius:50%;background:#66ff00;border:1.3px solid #000;box-shadow:inset 1px 1px 0 #2a8a00,inset -1px -1px 0 #c8ffa0"></div>
<div class="a" style="left:319px;top:517px;width:646px;height:166px;background:#000;border:2px solid #cccccc;border-right-color:#a0a0a0;border-bottom-color:#a0a0a0"></div>
<div class="a" style="left:323px;top:521px;width:18px;height:18px;background:#ff0000;border-style:solid;border-width:2px;border-color:#ffc8c8 #7a3030 #7a3030 #ffc8c8"></div><div class="a" style="left:343px;top:521px;width:18px;height:18px;background:#ff0000;border-style:solid;border-width:2px;border-color:#ffc8c8 #7a3030 #7a3030 #ffc8c8"></div><div class="a" style="left:363px;top:521px;width:18px;height:18px;background:#ff0000;border-style:solid;border-width:2px;border-color:#ffc8c8 #7a3030 #7a3030 #ffc8c8"></div><div class="a" style="left:383px;top:521px;width:18px;height:18px;background:#ff0000;border-style:solid;border-width:2px;border-color:#ffc8c8 #7a3030 #7a3030 #ffc8c8"></div><div class="a" style="left:403px;top:521px;width:18px;height:18px;background:#66ff00;border-style:solid;border-width:2px;border-color:#3a7a2a #d8ffd0 #d8ffd0 #3a7a2a"></div><div class="a" style="left:423px;top:521px;width:18px;height:18px;background:#66ff00;border-style:solid;border-width:2px;border-color:#3a7a2a #d8ffd0 #d8ffd0 #3a7a2a"></div><div class="a" style="left:443px;top:521px;width:18px;height:18px;background:#66ff00;border-style:solid;border-width:2px;border-color:#3a7a2a #d8ffd0 #d8ffd0 #3a7a2a"></div><div class="a" style="left:463px;top:521px;width:18px;height:18px;background:#66ff00;border-style:solid;border-width:2px;border-color:#3a7a2a #d8ffd0 #d8ffd0 #3a7a2a"></div><div class="a" style="left:483px;top:521px;width:18px;height:18px;background:#66ff00;border-style:solid;border-width:2px;border-color:#3a7a2a #d8ffd0 #d8ffd0 #3a7a2a"></div><div class="a" style="left:503px;top:521px;width:18px;height:18px;background:#66ff00;border-style:solid;border-width:2px;border-color:#3a7a2a #d8ffd0 #d8ffd0 #3a7a2a"></div><div class="a" style="left:523px;top:521px;width:18px;height:18px;background:#66ff00;border-style:solid;border-width:2px;border-color:#3a7a2a #d8ffd0 #d8ffd0 #3a7a2a"></div><div class="a" style="left:543px;top:521px;width:18px;height:18px;background:#66ff00;border-style:solid;border-width:2px;border-color:#3a7a2a #d8ffd0 #d8ffd0 #3a7a2a"></div><div class="a" style="left:563px;top:521px;width:18px;height:18px;background:#66ff00;border-style:solid;border-width:2px;border-color:#3a7a2a #d8ffd0 #d8ffd0 #3a7a2a"></div><div class="a" style="left:583px;top:521px;width:18px;height:18px;background:#66ff00;border-style:solid;border-width:2px;border-color:#3a7a2a #d8ffd0 #d8ffd0 #3a7a2a"></div><div class="a" style="left:603px;top:521px;width:18px;height:18px;background:#66ff00;border-style:solid;border-width:2px;border-color:#3a7a2a #d8ffd0 #d8ffd0 #3a7a2a"></div><div class="a" style="left:623px;top:521px;width:18px;height:18px;background:#66ff00;border-style:solid;border-width:2px;border-color:#3a7a2a #d8ffd0 #d8ffd0 #3a7a2a"></div><div class="a" style="left:643px;top:521px;width:18px;height:18px;background:#66ff00;border-style:solid;border-width:2px;border-color:#3a7a2a #d8ffd0 #d8ffd0 #3a7a2a"></div><div class="a" style="left:663px;top:521px;width:18px;height:18px;background:#66ff00;border-style:solid;border-width:2px;border-color:#3a7a2a #d8ffd0 #d8ffd0 #3a7a2a"></div><div class="a" style="left:683px;top:521px;width:18px;height:18px;background:#66ff00;border-style:solid;border-width:2px;border-color:#3a7a2a #d8ffd0 #d8ffd0 #3a7a2a"></div><div class="a" style="left:703px;top:521px;width:18px;height:18px;background:#66ff00;border-style:solid;border-width:2px;border-color:#3a7a2a #d8ffd0 #d8ffd0 #3a7a2a"></div><div class="a" style="left:723px;top:521px;width:18px;height:18px;background:#66ff00;border-style:solid;border-width:2px;border-color:#3a7a2a #d8ffd0 #d8ffd0 #3a7a2a"></div><div class="a" style="left:743px;top:521px;width:18px;height:18px;background:#66ff00;border-style:solid;border-width:2px;border-color:#3a7a2a #d8ffd0 #d8ffd0 #3a7a2a"></div><div class="a" style="left:763px;top:521px;width:18px;height:18px;background:#66ff00;border-style:solid;border-width:2px;border-color:#3a7a2a #d8ffd0 #d8ffd0 #3a7a2a"></div><div class="a" style="left:783px;top:521px;width:18px;height:18px;background:#66ff00;border-style:solid;border-width:2px;border-color:#3a7a2a #d8ffd0 #d8ffd0 #3a7a2a"></div><div class="a" style="left:803px;top:521px;width:18px;height:18px;background:#66ff00;border-style:solid;border-width:2px;border-color:#3a7a2a #d8ffd0 #d8ffd0 #3a7a2a"></div><div class="a" style="left:823px;top:521px;width:18px;height:18px;background:#66ff00;border-style:solid;border-width:2px;border-color:#3a7a2a #d8ffd0 #d8ffd0 #3a7a2a"></div><div class="a" style="left:843px;top:521px;width:18px;height:18px;background:#66ff00;border-style:solid;border-width:2px;border-color:#3a7a2a #d8ffd0 #d8ffd0 #3a7a2a"></div><div class="a" style="left:863px;top:521px;width:18px;height:18px;background:#66ff00;border-style:solid;border-width:2px;border-color:#3a7a2a #d8ffd0 #d8ffd0 #3a7a2a"></div><div class="a" style="left:883px;top:521px;width:18px;height:18px;background:#66ff00;border-style:solid;border-width:2px;border-color:#3a7a2a #d8ffd0 #d8ffd0 #3a7a2a"></div><div class="a" style="left:903px;top:521px;width:18px;height:18px;background:#66ff00;border-style:solid;border-width:2px;border-color:#3a7a2a #d8ffd0 #d8ffd0 #3a7a2a"></div><div class="a" style="left:923px;top:521px;width:18px;height:18px;background:#66ff00;border-style:solid;border-width:2px;border-color:#3a7a2a #d8ffd0 #d8ffd0 #3a7a2a"></div><div class="a" style="left:943px;top:521px;width:18px;height:18px;background:#66ff00;border-style:solid;border-width:2px;border-color:#3a7a2a #d8ffd0 #d8ffd0 #3a7a2a"></div><div class="a" style="left:323px;top:541px;width:18px;height:18px;background:#66ff00;border-style:solid;border-width:2px;border-color:#3a7a2a #d8ffd0 #d8ffd0 #3a7a2a"></div><div class="a" style="left:343px;top:541px;width:18px;height:18px;background:#66ff00;border-style:solid;border-width:2px;border-color:#3a7a2a #d8ffd0 #d8ffd0 #3a7a2a"></div><div class="a" style="left:363px;top:541px;width:18px;height:18px;background:#66ff00;border-style:solid;border-width:2px;border-color:#3a7a2a #d8ffd0 #d8ffd0 #3a7a2a"></div><div class="a" style="left:383px;top:541px;width:18px;height:18px;background:#66ff00;border-style:solid;border-width:2px;border-color:#3a7a2a #d8ffd0 #d8ffd0 #3a7a2a"></div><div class="a" style="left:403px;top:541px;width:18px;height:18px;background:#ff0000;border-style:solid;border-width:2px;border-color:#ffc8c8 #7a3030 #7a3030 #ffc8c8"></div><div class="a" style="left:423px;top:541px;width:18px;height:18px;background:#ff0000;border-style:solid;border-width:2px;border-color:#ffc8c8 #7a3030 #7a3030 #ffc8c8"></div><div class="a" style="left:443px;top:541px;width:18px;height:18px;background:#ff0000;border-style:solid;border-width:2px;border-color:#ffc8c8 #7a3030 #7a3030 #ffc8c8"></div><div class="a" style="left:463px;top:541px;width:18px;height:18px;background:#ff0000;border-style:solid;border-width:2px;border-color:#ffc8c8 #7a3030 #7a3030 #ffc8c8"></div><div class="a" style="left:483px;top:541px;width:18px;height:18px;background:#66ff00;border-style:solid;border-width:2px;border-color:#3a7a2a #d8ffd0 #d8ffd0 #3a7a2a"></div><div class="a" style="left:503px;top:541px;width:18px;height:18px;background:#66ff00;border-style:solid;border-width:2px;border-color:#3a7a2a #d8ffd0 #d8ffd0 #3a7a2a"></div><div class="a" style="left:523px;top:541px;width:18px;height:18px;background:#66ff00;border-style:solid;border-width:2px;border-color:#3a7a2a #d8ffd0 #d8ffd0 #3a7a2a"></div><div class="a" style="left:543px;top:541px;width:18px;height:18px;background:#66ff00;border-style:solid;border-width:2px;border-color:#3a7a2a #d8ffd0 #d8ffd0 #3a7a2a"></div><div class="a" style="left:563px;top:541px;width:18px;height:18px;background:#66ff00;border-style:solid;border-width:2px;border-color:#3a7a2a #d8ffd0 #d8ffd0 #3a7a2a"></div><div class="a" style="left:583px;top:541px;width:18px;height:18px;background:#66ff00;border-style:solid;border-width:2px;border-color:#3a7a2a #d8ffd0 #d8ffd0 #3a7a2a"></div><div class="a" style="left:603px;top:541px;width:18px;height:18px;background:#66ff00;border-style:solid;border-width:2px;border-color:#3a7a2a #d8ffd0 #d8ffd0 #3a7a2a"></div><div class="a" style="left:623px;top:541px;width:18px;height:18px;background:#66ff00;border-style:solid;border-width:2px;border-color:#3a7a2a #d8ffd0 #d8ffd0 #3a7a2a"></div><div class="a" style="left:643px;top:541px;width:18px;height:18px;background:#66ff00;border-style:solid;border-width:2px;border-color:#3a7a2a #d8ffd0 #d8ffd0 #3a7a2a"></div><div class="a" style="left:663px;top:541px;width:18px;height:18px;background:#66ff00;border-style:solid;border-width:2px;border-color:#3a7a2a #d8ffd0 #d8ffd0 #3a7a2a"></div><div class="a" style="left:683px;top:541px;width:18px;height:18px;background:#66ff00;border-style:solid;border-width:2px;border-color:#3a7a2a #d8ffd0 #d8ffd0 #3a7a2a"></div><div class="a" style="left:703px;top:541px;width:18px;height:18px;background:#66ff00;border-style:solid;border-width:2px;border-color:#3a7a2a #d8ffd0 #d8ffd0 #3a7a2a"></div><div class="a" style="left:723px;top:541px;width:18px;height:18px;background:#66ff00;border-style:solid;border-width:2px;border-color:#3a7a2a #d8ffd0 #d8ffd0 #3a7a2a"></div><div class="a" style="left:743px;top:541px;width:18px;height:18px;background:#66ff00;border-style:solid;border-width:2px;border-color:#3a7a2a #d8ffd0 #d8ffd0 #3a7a2a"></div><div class="a" style="left:763px;top:541px;width:18px;height:18px;background:#66ff00;border-style:solid;border-width:2px;border-color:#3a7a2a #d8ffd0 #d8ffd0 #3a7a2a"></div><div class="a" style="left:783px;top:541px;width:18px;height:18px;background:#66ff00;border-style:solid;border-width:2px;border-color:#3a7a2a #d8ffd0 #d8ffd0 #3a7a2a"></div><div class="a" style="left:803px;top:541px;width:18px;height:18px;background:#66ff00;border-style:solid;border-width:2px;border-color:#3a7a2a #d8ffd0 #d8ffd0 #3a7a2a"></div><div class="a" style="left:823px;top:541px;width:18px;height:18px;background:#66ff00;border-style:solid;border-width:2px;border-color:#3a7a2a #d8ffd0 #d8ffd0 #3a7a2a"></div><div class="a" style="left:843px;top:541px;width:18px;height:18px;background:#66ff00;border-style:solid;border-width:2px;border-color:#3a7a2a #d8ffd0 #d8ffd0 #3a7a2a"></div><div class="a" style="left:863px;top:541px;width:18px;height:18px;background:#66ff00;border-style:solid;border-width:2px;border-color:#3a7a2a #d8ffd0 #d8ffd0 #3a7a2a"></div><div class="a" style="left:883px;top:541px;width:18px;height:18px;background:#66ff00;border-style:solid;border-width:2px;border-color:#3a7a2a #d8ffd0 #d8ffd0 #3a7a2a"></div><div class="a" style="left:903px;top:541px;width:18px;height:18px;background:#66ff00;border-style:solid;border-width:2px;border-color:#3a7a2a #d8ffd0 #d8ffd0 #3a7a2a"></div><div class="a" style="left:923px;top:541px;width:18px;height:18px;background:#66ff00;border-style:solid;border-width:2px;border-color:#3a7a2a #d8ffd0 #d8ffd0 #3a7a2a"></div><div class="a" style="left:943px;top:541px;width:18px;height:18px;background:#66ff00;border-style:solid;border-width:2px;border-color:#3a7a2a #d8ffd0 #d8ffd0 #3a7a2a"></div><div class="a" style="left:323px;top:561px;width:18px;height:18px;background:#66ff00;border-style:solid;border-width:2px;border-color:#3a7a2a #d8ffd0 #d8ffd0 #3a7a2a"></div><div class="a" style="left:343px;top:561px;width:18px;height:18px;background:#66ff00;border-style:solid;border-width:2px;border-color:#3a7a2a #d8ffd0 #d8ffd0 #3a7a2a"></div><div class="a" style="left:363px;top:561px;width:18px;height:18px;background:#66ff00;border-style:solid;border-width:2px;border-color:#3a7a2a #d8ffd0 #d8ffd0 #3a7a2a"></div><div class="a" style="left:383px;top:561px;width:18px;height:18px;background:#66ff00;border-style:solid;border-width:2px;border-color:#3a7a2a #d8ffd0 #d8ffd0 #3a7a2a"></div><div class="a" style="left:403px;top:561px;width:18px;height:18px;background:#66ff00;border-style:solid;border-width:2px;border-color:#3a7a2a #d8ffd0 #d8ffd0 #3a7a2a"></div><div class="a" style="left:423px;top:561px;width:18px;height:18px;background:#66ff00;border-style:solid;border-width:2px;border-color:#3a7a2a #d8ffd0 #d8ffd0 #3a7a2a"></div><div class="a" style="left:443px;top:561px;width:18px;height:18px;background:#66ff00;border-style:solid;border-width:2px;border-color:#3a7a2a #d8ffd0 #d8ffd0 #3a7a2a"></div><div class="a" style="left:463px;top:561px;width:18px;height:18px;background:#66ff00;border-style:solid;border-width:2px;border-color:#3a7a2a #d8ffd0 #d8ffd0 #3a7a2a"></div><div class="a" style="left:483px;top:561px;width:18px;height:18px;background:#ff0000;border-style:solid;border-width:2px;border-color:#ffc8c8 #7a3030 #7a3030 #ffc8c8"></div><div class="a" style="left:503px;top:561px;width:18px;height:18px;background:#ff0000;border-style:solid;border-width:2px;border-color:#ffc8c8 #7a3030 #7a3030 #ffc8c8"></div><div class="a" style="left:523px;top:561px;width:18px;height:18px;background:#ff0000;border-style:solid;border-width:2px;border-color:#ffc8c8 #7a3030 #7a3030 #ffc8c8"></div><div class="a" style="left:543px;top:561px;width:18px;height:18px;background:#ff0000;border-style:solid;border-width:2px;border-color:#ffc8c8 #7a3030 #7a3030 #ffc8c8"></div><div class="a" style="left:563px;top:561px;width:18px;height:18px;background:#66ff00;border-style:solid;border-width:2px;border-color:#3a7a2a #d8ffd0 #d8ffd0 #3a7a2a"></div><div class="a" style="left:583px;top:561px;width:18px;height:18px;background:#66ff00;border-style:solid;border-width:2px;border-color:#3a7a2a #d8ffd0 #d8ffd0 #3a7a2a"></div><div class="a" style="left:603px;top:561px;width:18px;height:18px;background:#66ff00;border-style:solid;border-width:2px;border-color:#3a7a2a #d8ffd0 #d8ffd0 #3a7a2a"></div><div class="a" style="left:623px;top:561px;width:18px;height:18px;background:#66ff00;border-style:solid;border-width:2px;border-color:#3a7a2a #d8ffd0 #d8ffd0 #3a7a2a"></div><div class="a" style="left:643px;top:561px;width:18px;height:18px;background:#66ff00;border-style:solid;border-width:2px;border-color:#3a7a2a #d8ffd0 #d8ffd0 #3a7a2a"></div><div class="a" style="left:663px;top:561px;width:18px;height:18px;background:#66ff00;border-style:solid;border-width:2px;border-color:#3a7a2a #d8ffd0 #d8ffd0 #3a7a2a"></div><div class="a" style="left:683px;top:561px;width:18px;height:18px;background:#66ff00;border-style:solid;border-width:2px;border-color:#3a7a2a #d8ffd0 #d8ffd0 #3a7a2a"></div><div class="a" style="left:703px;top:561px;width:18px;height:18px;background:#66ff00;border-style:solid;border-width:2px;border-color:#3a7a2a #d8ffd0 #d8ffd0 #3a7a2a"></div><div class="a" style="left:723px;top:561px;width:18px;height:18px;background:#66ff00;border-style:solid;border-width:2px;border-color:#3a7a2a #d8ffd0 #d8ffd0 #3a7a2a"></div><div class="a" style="left:743px;top:561px;width:18px;height:18px;background:#66ff00;border-style:solid;border-width:2px;border-color:#3a7a2a #d8ffd0 #d8ffd0 #3a7a2a"></div><div class="a" style="left:763px;top:561px;width:18px;height:18px;background:#66ff00;border-style:solid;border-width:2px;border-color:#3a7a2a #d8ffd0 #d8ffd0 #3a7a2a"></div><div class="a" style="left:783px;top:561px;width:18px;height:18px;background:#66ff00;border-style:solid;border-width:2px;border-color:#3a7a2a #d8ffd0 #d8ffd0 #3a7a2a"></div><div class="a" style="left:803px;top:561px;width:18px;height:18px;background:#66ff00;border-style:solid;border-width:2px;border-color:#3a7a2a #d8ffd0 #d8ffd0 #3a7a2a"></div><div class="a" style="left:823px;top:561px;width:18px;height:18px;background:#66ff00;border-style:solid;border-width:2px;border-color:#3a7a2a #d8ffd0 #d8ffd0 #3a7a2a"></div><div class="a" style="left:843px;top:561px;width:18px;height:18px;background:#66ff00;border-style:solid;border-width:2px;border-color:#3a7a2a #d8ffd0 #d8ffd0 #3a7a2a"></div><div class="a" style="left:863px;top:561px;width:18px;height:18px;background:#66ff00;border-style:solid;border-width:2px;border-color:#3a7a2a #d8ffd0 #d8ffd0 #3a7a2a"></div><div class="a" style="left:883px;top:561px;width:18px;height:18px;background:#66ff00;border-style:solid;border-width:2px;border-color:#3a7a2a #d8ffd0 #d8ffd0 #3a7a2a"></div><div class="a" style="left:903px;top:561px;width:18px;height:18px;background:#66ff00;border-style:solid;border-width:2px;border-color:#3a7a2a #d8ffd0 #d8ffd0 #3a7a2a"></div><div class="a" style="left:923px;top:561px;width:18px;height:18px;background:#66ff00;border-style:solid;border-width:2px;border-color:#3a7a2a #d8ffd0 #d8ffd0 #3a7a2a"></div><div class="a" style="left:943px;top:561px;width:18px;height:18px;background:#66ff00;border-style:solid;border-width:2px;border-color:#3a7a2a #d8ffd0 #d8ffd0 #3a7a2a"></div><div class="a" style="left:323px;top:581px;width:18px;height:18px;background:#66ff00;border-style:solid;border-width:2px;border-color:#3a7a2a #d8ffd0 #d8ffd0 #3a7a2a"></div><div class="a" style="left:343px;top:581px;width:18px;height:18px;background:#66ff00;border-style:solid;border-width:2px;border-color:#3a7a2a #d8ffd0 #d8ffd0 #3a7a2a"></div><div class="a" style="left:363px;top:581px;width:18px;height:18px;background:#66ff00;border-style:solid;border-width:2px;border-color:#3a7a2a #d8ffd0 #d8ffd0 #3a7a2a"></div><div class="a" style="left:383px;top:581px;width:18px;height:18px;background:#66ff00;border-style:solid;border-width:2px;border-color:#3a7a2a #d8ffd0 #d8ffd0 #3a7a2a"></div><div class="a" style="left:403px;top:581px;width:18px;height:18px;background:#66ff00;border-style:solid;border-width:2px;border-color:#3a7a2a #d8ffd0 #d8ffd0 #3a7a2a"></div><div class="a" style="left:423px;top:581px;width:18px;height:18px;background:#66ff00;border-style:solid;border-width:2px;border-color:#3a7a2a #d8ffd0 #d8ffd0 #3a7a2a"></div><div class="a" style="left:443px;top:581px;width:18px;height:18px;background:#66ff00;border-style:solid;border-width:2px;border-color:#3a7a2a #d8ffd0 #d8ffd0 #3a7a2a"></div><div class="a" style="left:463px;top:581px;width:18px;height:18px;background:#66ff00;border-style:solid;border-width:2px;border-color:#3a7a2a #d8ffd0 #d8ffd0 #3a7a2a"></div><div class="a" style="left:483px;top:581px;width:18px;height:18px;background:#66ff00;border-style:solid;border-width:2px;border-color:#3a7a2a #d8ffd0 #d8ffd0 #3a7a2a"></div><div class="a" style="left:503px;top:581px;width:18px;height:18px;background:#66ff00;border-style:solid;border-width:2px;border-color:#3a7a2a #d8ffd0 #d8ffd0 #3a7a2a"></div><div class="a" style="left:523px;top:581px;width:18px;height:18px;background:#66ff00;border-style:solid;border-width:2px;border-color:#3a7a2a #d8ffd0 #d8ffd0 #3a7a2a"></div><div class="a" style="left:543px;top:581px;width:18px;height:18px;background:#66ff00;border-style:solid;border-width:2px;border-color:#3a7a2a #d8ffd0 #d8ffd0 #3a7a2a"></div><div class="a" style="left:563px;top:581px;width:18px;height:18px;background:#ff0000;border-style:solid;border-width:2px;border-color:#ffc8c8 #7a3030 #7a3030 #ffc8c8"></div><div class="a" style="left:583px;top:581px;width:18px;height:18px;background:#ff0000;border-style:solid;border-width:2px;border-color:#ffc8c8 #7a3030 #7a3030 #ffc8c8"></div><div class="a" style="left:603px;top:581px;width:18px;height:18px;background:#ff0000;border-style:solid;border-width:2px;border-color:#ffc8c8 #7a3030 #7a3030 #ffc8c8"></div><div class="a" style="left:623px;top:581px;width:18px;height:18px;background:#ff0000;border-style:solid;border-width:2px;border-color:#ffc8c8 #7a3030 #7a3030 #ffc8c8"></div><div class="a" style="left:643px;top:581px;width:18px;height:18px;background:#66ff00;border-style:solid;border-width:2px;border-color:#3a7a2a #d8ffd0 #d8ffd0 #3a7a2a"></div><div class="a" style="left:663px;top:581px;width:18px;height:18px;background:#66ff00;border-style:solid;border-width:2px;border-color:#3a7a2a #d8ffd0 #d8ffd0 #3a7a2a"></div><div class="a" style="left:683px;top:581px;width:18px;height:18px;background:#66ff00;border-style:solid;border-width:2px;border-color:#3a7a2a #d8ffd0 #d8ffd0 #3a7a2a"></div><div class="a" style="left:703px;top:581px;width:18px;height:18px;background:#66ff00;border-style:solid;border-width:2px;border-color:#3a7a2a #d8ffd0 #d8ffd0 #3a7a2a"></div><div class="a" style="left:723px;top:581px;width:18px;height:18px;background:#66ff00;border-style:solid;border-width:2px;border-color:#3a7a2a #d8ffd0 #d8ffd0 #3a7a2a"></div><div class="a" style="left:743px;top:581px;width:18px;height:18px;background:#66ff00;border-style:solid;border-width:2px;border-color:#3a7a2a #d8ffd0 #d8ffd0 #3a7a2a"></div><div class="a" style="left:763px;top:581px;width:18px;height:18px;background:#66ff00;border-style:solid;border-width:2px;border-color:#3a7a2a #d8ffd0 #d8ffd0 #3a7a2a"></div><div class="a" style="left:783px;top:581px;width:18px;height:18px;background:#66ff00;border-style:solid;border-width:2px;border-color:#3a7a2a #d8ffd0 #d8ffd0 #3a7a2a"></div><div class="a" style="left:803px;top:581px;width:18px;height:18px;background:#66ff00;border-style:solid;border-width:2px;border-color:#3a7a2a #d8ffd0 #d8ffd0 #3a7a2a"></div><div class="a" style="left:823px;top:581px;width:18px;height:18px;background:#66ff00;border-style:solid;border-width:2px;border-color:#3a7a2a #d8ffd0 #d8ffd0 #3a7a2a"></div><div class="a" style="left:843px;top:581px;width:18px;height:18px;background:#66ff00;border-style:solid;border-width:2px;border-color:#3a7a2a #d8ffd0 #d8ffd0 #3a7a2a"></div><div class="a" style="left:863px;top:581px;width:18px;height:18px;background:#66ff00;border-style:solid;border-width:2px;border-color:#3a7a2a #d8ffd0 #d8ffd0 #3a7a2a"></div><div class="a" style="left:883px;top:581px;width:18px;height:18px;background:#66ff00;border-style:solid;border-width:2px;border-color:#3a7a2a #d8ffd0 #d8ffd0 #3a7a2a"></div><div class="a" style="left:903px;top:581px;width:18px;height:18px;background:#66ff00;border-style:solid;border-width:2px;border-color:#3a7a2a #d8ffd0 #d8ffd0 #3a7a2a"></div><div class="a" style="left:923px;top:581px;width:18px;height:18px;background:#66ff00;border-style:solid;border-width:2px;border-color:#3a7a2a #d8ffd0 #d8ffd0 #3a7a2a"></div><div class="a" style="left:943px;top:581px;width:18px;height:18px;background:#66ff00;border-style:solid;border-width:2px;border-color:#3a7a2a #d8ffd0 #d8ffd0 #3a7a2a"></div><div class="a" style="left:323px;top:601px;width:18px;height:18px;background:#66ff00;border-style:solid;border-width:2px;border-color:#3a7a2a #d8ffd0 #d8ffd0 #3a7a2a"></div><div class="a" style="left:343px;top:601px;width:18px;height:18px;background:#66ff00;border-style:solid;border-width:2px;border-color:#3a7a2a #d8ffd0 #d8ffd0 #3a7a2a"></div><div class="a" style="left:363px;top:601px;width:18px;height:18px;background:#66ff00;border-style:solid;border-width:2px;border-color:#3a7a2a #d8ffd0 #d8ffd0 #3a7a2a"></div><div class="a" style="left:383px;top:601px;width:18px;height:18px;background:#66ff00;border-style:solid;border-width:2px;border-color:#3a7a2a #d8ffd0 #d8ffd0 #3a7a2a"></div><div class="a" style="left:403px;top:601px;width:18px;height:18px;background:#66ff00;border-style:solid;border-width:2px;border-color:#3a7a2a #d8ffd0 #d8ffd0 #3a7a2a"></div><div class="a" style="left:423px;top:601px;width:18px;height:18px;background:#66ff00;border-style:solid;border-width:2px;border-color:#3a7a2a #d8ffd0 #d8ffd0 #3a7a2a"></div><div class="a" style="left:443px;top:601px;width:18px;height:18px;background:#66ff00;border-style:solid;border-width:2px;border-color:#3a7a2a #d8ffd0 #d8ffd0 #3a7a2a"></div><div class="a" style="left:463px;top:601px;width:18px;height:18px;background:#66ff00;border-style:solid;border-width:2px;border-color:#3a7a2a #d8ffd0 #d8ffd0 #3a7a2a"></div><div class="a" style="left:483px;top:601px;width:18px;height:18px;background:#66ff00;border-style:solid;border-width:2px;border-color:#3a7a2a #d8ffd0 #d8ffd0 #3a7a2a"></div><div class="a" style="left:503px;top:601px;width:18px;height:18px;background:#66ff00;border-style:solid;border-width:2px;border-color:#3a7a2a #d8ffd0 #d8ffd0 #3a7a2a"></div><div class="a" style="left:523px;top:601px;width:18px;height:18px;background:#66ff00;border-style:solid;border-width:2px;border-color:#3a7a2a #d8ffd0 #d8ffd0 #3a7a2a"></div><div class="a" style="left:543px;top:601px;width:18px;height:18px;background:#66ff00;border-style:solid;border-width:2px;border-color:#3a7a2a #d8ffd0 #d8ffd0 #3a7a2a"></div><div class="a" style="left:563px;top:601px;width:18px;height:18px;background:#66ff00;border-style:solid;border-width:2px;border-color:#3a7a2a #d8ffd0 #d8ffd0 #3a7a2a"></div><div class="a" style="left:583px;top:601px;width:18px;height:18px;background:#66ff00;border-style:solid;border-width:2px;border-color:#3a7a2a #d8ffd0 #d8ffd0 #3a7a2a"></div><div class="a" style="left:603px;top:601px;width:18px;height:18px;background:#66ff00;border-style:solid;border-width:2px;border-color:#3a7a2a #d8ffd0 #d8ffd0 #3a7a2a"></div><div class="a" style="left:623px;top:601px;width:18px;height:18px;background:#66ff00;border-style:solid;border-width:2px;border-color:#3a7a2a #d8ffd0 #d8ffd0 #3a7a2a"></div><div class="a" style="left:643px;top:601px;width:18px;height:18px;background:#ff0000;border-style:solid;border-width:2px;border-color:#ffc8c8 #7a3030 #7a3030 #ffc8c8"></div><div class="a" style="left:663px;top:601px;width:18px;height:18px;background:#ff0000;border-style:solid;border-width:2px;border-color:#ffc8c8 #7a3030 #7a3030 #ffc8c8"></div><div class="a" style="left:683px;top:601px;width:18px;height:18px;background:#ff0000;border-style:solid;border-width:2px;border-color:#ffc8c8 #7a3030 #7a3030 #ffc8c8"></div><div class="a" style="left:703px;top:601px;width:18px;height:18px;background:#ff0000;border-style:solid;border-width:2px;border-color:#ffc8c8 #7a3030 #7a3030 #ffc8c8"></div><div class="a" style="left:723px;top:601px;width:18px;height:18px;background:#66ff00;border-style:solid;border-width:2px;border-color:#3a7a2a #d8ffd0 #d8ffd0 #3a7a2a"></div><div class="a" style="left:743px;top:601px;width:18px;height:18px;background:#66ff00;border-style:solid;border-width:2px;border-color:#3a7a2a #d8ffd0 #d8ffd0 #3a7a2a"></div><div class="a" style="left:763px;top:601px;width:18px;height:18px;background:#66ff00;border-style:solid;border-width:2px;border-color:#3a7a2a #d8ffd0 #d8ffd0 #3a7a2a"></div><div class="a" style="left:783px;top:601px;width:18px;height:18px;background:#66ff00;border-style:solid;border-width:2px;border-color:#3a7a2a #d8ffd0 #d8ffd0 #3a7a2a"></div><div class="a" style="left:803px;top:601px;width:18px;height:18px;background:#66ff00;border-style:solid;border-width:2px;border-color:#3a7a2a #d8ffd0 #d8ffd0 #3a7a2a"></div><div class="a" style="left:823px;top:601px;width:18px;height:18px;background:#66ff00;border-style:solid;border-width:2px;border-color:#3a7a2a #d8ffd0 #d8ffd0 #3a7a2a"></div><div class="a" style="left:843px;top:601px;width:18px;height:18px;background:#66ff00;border-style:solid;border-width:2px;border-color:#3a7a2a #d8ffd0 #d8ffd0 #3a7a2a"></div><div class="a" style="left:863px;top:601px;width:18px;height:18px;background:#66ff00;border-style:solid;border-width:2px;border-color:#3a7a2a #d8ffd0 #d8ffd0 #3a7a2a"></div><div class="a" style="left:883px;top:601px;width:18px;height:18px;background:#66ff00;border-style:solid;border-width:2px;border-color:#3a7a2a #d8ffd0 #d8ffd0 #3a7a2a"></div><div class="a" style="left:903px;top:601px;width:18px;height:18px;background:#66ff00;border-style:solid;border-width:2px;border-color:#3a7a2a #d8ffd0 #d8ffd0 #3a7a2a"></div><div class="a" style="left:923px;top:601px;width:18px;height:18px;background:#66ff00;border-style:solid;border-width:2px;border-color:#3a7a2a #d8ffd0 #d8ffd0 #3a7a2a"></div><div class="a" style="left:943px;top:601px;width:18px;height:18px;background:#66ff00;border-style:solid;border-width:2px;border-color:#3a7a2a #d8ffd0 #d8ffd0 #3a7a2a"></div><div class="a" style="left:323px;top:621px;width:18px;height:18px;background:#66ff00;border-style:solid;border-width:2px;border-color:#3a7a2a #d8ffd0 #d8ffd0 #3a7a2a"></div><div class="a" style="left:343px;top:621px;width:18px;height:18px;background:#66ff00;border-style:solid;border-width:2px;border-color:#3a7a2a #d8ffd0 #d8ffd0 #3a7a2a"></div><div class="a" style="left:363px;top:621px;width:18px;height:18px;background:#66ff00;border-style:solid;border-width:2px;border-color:#3a7a2a #d8ffd0 #d8ffd0 #3a7a2a"></div><div class="a" style="left:383px;top:621px;width:18px;height:18px;background:#66ff00;border-style:solid;border-width:2px;border-color:#3a7a2a #d8ffd0 #d8ffd0 #3a7a2a"></div><div class="a" style="left:403px;top:621px;width:18px;height:18px;background:#66ff00;border-style:solid;border-width:2px;border-color:#3a7a2a #d8ffd0 #d8ffd0 #3a7a2a"></div><div class="a" style="left:423px;top:621px;width:18px;height:18px;background:#66ff00;border-style:solid;border-width:2px;border-color:#3a7a2a #d8ffd0 #d8ffd0 #3a7a2a"></div><div class="a" style="left:443px;top:621px;width:18px;height:18px;background:#66ff00;border-style:solid;border-width:2px;border-color:#3a7a2a #d8ffd0 #d8ffd0 #3a7a2a"></div><div class="a" style="left:463px;top:621px;width:18px;height:18px;background:#66ff00;border-style:solid;border-width:2px;border-color:#3a7a2a #d8ffd0 #d8ffd0 #3a7a2a"></div><div class="a" style="left:483px;top:621px;width:18px;height:18px;background:#66ff00;border-style:solid;border-width:2px;border-color:#3a7a2a #d8ffd0 #d8ffd0 #3a7a2a"></div><div class="a" style="left:503px;top:621px;width:18px;height:18px;background:#66ff00;border-style:solid;border-width:2px;border-color:#3a7a2a #d8ffd0 #d8ffd0 #3a7a2a"></div><div class="a" style="left:523px;top:621px;width:18px;height:18px;background:#66ff00;border-style:solid;border-width:2px;border-color:#3a7a2a #d8ffd0 #d8ffd0 #3a7a2a"></div><div class="a" style="left:543px;top:621px;width:18px;height:18px;background:#66ff00;border-style:solid;border-width:2px;border-color:#3a7a2a #d8ffd0 #d8ffd0 #3a7a2a"></div><div class="a" style="left:563px;top:621px;width:18px;height:18px;background:#66ff00;border-style:solid;border-width:2px;border-color:#3a7a2a #d8ffd0 #d8ffd0 #3a7a2a"></div><div class="a" style="left:583px;top:621px;width:18px;height:18px;background:#66ff00;border-style:solid;border-width:2px;border-color:#3a7a2a #d8ffd0 #d8ffd0 #3a7a2a"></div><div class="a" style="left:603px;top:621px;width:18px;height:18px;background:#66ff00;border-style:solid;border-width:2px;border-color:#3a7a2a #d8ffd0 #d8ffd0 #3a7a2a"></div><div class="a" style="left:623px;top:621px;width:18px;height:18px;background:#66ff00;border-style:solid;border-width:2px;border-color:#3a7a2a #d8ffd0 #d8ffd0 #3a7a2a"></div><div class="a" style="left:643px;top:621px;width:18px;height:18px;background:#66ff00;border-style:solid;border-width:2px;border-color:#3a7a2a #d8ffd0 #d8ffd0 #3a7a2a"></div><div class="a" style="left:663px;top:621px;width:18px;height:18px;background:#66ff00;border-style:solid;border-width:2px;border-color:#3a7a2a #d8ffd0 #d8ffd0 #3a7a2a"></div><div class="a" style="left:683px;top:621px;width:18px;height:18px;background:#66ff00;border-style:solid;border-width:2px;border-color:#3a7a2a #d8ffd0 #d8ffd0 #3a7a2a"></div><div class="a" style="left:703px;top:621px;width:18px;height:18px;background:#66ff00;border-style:solid;border-width:2px;border-color:#3a7a2a #d8ffd0 #d8ffd0 #3a7a2a"></div><div class="a" style="left:723px;top:621px;width:18px;height:18px;background:#ff0000;border-style:solid;border-width:2px;border-color:#ffc8c8 #7a3030 #7a3030 #ffc8c8"></div><div class="a" style="left:743px;top:621px;width:18px;height:18px;background:#ff0000;border-style:solid;border-width:2px;border-color:#ffc8c8 #7a3030 #7a3030 #ffc8c8"></div><div class="a" style="left:763px;top:621px;width:18px;height:18px;background:#ff0000;border-style:solid;border-width:2px;border-color:#ffc8c8 #7a3030 #7a3030 #ffc8c8"></div><div class="a" style="left:783px;top:621px;width:18px;height:18px;background:#ff0000;border-style:solid;border-width:2px;border-color:#ffc8c8 #7a3030 #7a3030 #ffc8c8"></div><div class="a" style="left:803px;top:621px;width:18px;height:18px;background:#66ff00;border-style:solid;border-width:2px;border-color:#3a7a2a #d8ffd0 #d8ffd0 #3a7a2a"></div><div class="a" style="left:823px;top:621px;width:18px;height:18px;background:#66ff00;border-style:solid;border-width:2px;border-color:#3a7a2a #d8ffd0 #d8ffd0 #3a7a2a"></div><div class="a" style="left:843px;top:621px;width:18px;height:18px;background:#66ff00;border-style:solid;border-width:2px;border-color:#3a7a2a #d8ffd0 #d8ffd0 #3a7a2a"></div><div class="a" style="left:863px;top:621px;width:18px;height:18px;background:#66ff00;border-style:solid;border-width:2px;border-color:#3a7a2a #d8ffd0 #d8ffd0 #3a7a2a"></div><div class="a" style="left:883px;top:621px;width:18px;height:18px;background:#66ff00;border-style:solid;border-width:2px;border-color:#3a7a2a #d8ffd0 #d8ffd0 #3a7a2a"></div><div class="a" style="left:903px;top:621px;width:18px;height:18px;background:#66ff00;border-style:solid;border-width:2px;border-color:#3a7a2a #d8ffd0 #d8ffd0 #3a7a2a"></div><div class="a" style="left:923px;top:621px;width:18px;height:18px;background:#66ff00;border-style:solid;border-width:2px;border-color:#3a7a2a #d8ffd0 #d8ffd0 #3a7a2a"></div><div class="a" style="left:943px;top:621px;width:18px;height:18px;background:#66ff00;border-style:solid;border-width:2px;border-color:#3a7a2a #d8ffd0 #d8ffd0 #3a7a2a"></div><div class="a" style="left:323px;top:641px;width:18px;height:18px;background:#66ff00;border-style:solid;border-width:2px;border-color:#3a7a2a #d8ffd0 #d8ffd0 #3a7a2a"></div><div class="a" style="left:343px;top:641px;width:18px;height:18px;background:#66ff00;border-style:solid;border-width:2px;border-color:#3a7a2a #d8ffd0 #d8ffd0 #3a7a2a"></div><div class="a" style="left:363px;top:641px;width:18px;height:18px;background:#66ff00;border-style:solid;border-width:2px;border-color:#3a7a2a #d8ffd0 #d8ffd0 #3a7a2a"></div><div class="a" style="left:383px;top:641px;width:18px;height:18px;background:#66ff00;border-style:solid;border-width:2px;border-color:#3a7a2a #d8ffd0 #d8ffd0 #3a7a2a"></div><div class="a" style="left:403px;top:641px;width:18px;height:18px;background:#66ff00;border-style:solid;border-width:2px;border-color:#3a7a2a #d8ffd0 #d8ffd0 #3a7a2a"></div><div class="a" style="left:423px;top:641px;width:18px;height:18px;background:#66ff00;border-style:solid;border-width:2px;border-color:#3a7a2a #d8ffd0 #d8ffd0 #3a7a2a"></div><div class="a" style="left:443px;top:641px;width:18px;height:18px;background:#66ff00;border-style:solid;border-width:2px;border-color:#3a7a2a #d8ffd0 #d8ffd0 #3a7a2a"></div><div class="a" style="left:463px;top:641px;width:18px;height:18px;background:#66ff00;border-style:solid;border-width:2px;border-color:#3a7a2a #d8ffd0 #d8ffd0 #3a7a2a"></div><div class="a" style="left:483px;top:641px;width:18px;height:18px;background:#66ff00;border-style:solid;border-width:2px;border-color:#3a7a2a #d8ffd0 #d8ffd0 #3a7a2a"></div><div class="a" style="left:503px;top:641px;width:18px;height:18px;background:#66ff00;border-style:solid;border-width:2px;border-color:#3a7a2a #d8ffd0 #d8ffd0 #3a7a2a"></div><div class="a" style="left:523px;top:641px;width:18px;height:18px;background:#66ff00;border-style:solid;border-width:2px;border-color:#3a7a2a #d8ffd0 #d8ffd0 #3a7a2a"></div><div class="a" style="left:543px;top:641px;width:18px;height:18px;background:#66ff00;border-style:solid;border-width:2px;border-color:#3a7a2a #d8ffd0 #d8ffd0 #3a7a2a"></div><div class="a" style="left:563px;top:641px;width:18px;height:18px;background:#66ff00;border-style:solid;border-width:2px;border-color:#3a7a2a #d8ffd0 #d8ffd0 #3a7a2a"></div><div class="a" style="left:583px;top:641px;width:18px;height:18px;background:#66ff00;border-style:solid;border-width:2px;border-color:#3a7a2a #d8ffd0 #d8ffd0 #3a7a2a"></div><div class="a" style="left:603px;top:641px;width:18px;height:18px;background:#66ff00;border-style:solid;border-width:2px;border-color:#3a7a2a #d8ffd0 #d8ffd0 #3a7a2a"></div><div class="a" style="left:623px;top:641px;width:18px;height:18px;background:#66ff00;border-style:solid;border-width:2px;border-color:#3a7a2a #d8ffd0 #d8ffd0 #3a7a2a"></div><div class="a" style="left:643px;top:641px;width:18px;height:18px;background:#66ff00;border-style:solid;border-width:2px;border-color:#3a7a2a #d8ffd0 #d8ffd0 #3a7a2a"></div><div class="a" style="left:663px;top:641px;width:18px;height:18px;background:#66ff00;border-style:solid;border-width:2px;border-color:#3a7a2a #d8ffd0 #d8ffd0 #3a7a2a"></div><div class="a" style="left:683px;top:641px;width:18px;height:18px;background:#66ff00;border-style:solid;border-width:2px;border-color:#3a7a2a #d8ffd0 #d8ffd0 #3a7a2a"></div><div class="a" style="left:703px;top:641px;width:18px;height:18px;background:#66ff00;border-style:solid;border-width:2px;border-color:#3a7a2a #d8ffd0 #d8ffd0 #3a7a2a"></div><div class="a" style="left:723px;top:641px;width:18px;height:18px;background:#66ff00;border-style:solid;border-width:2px;border-color:#3a7a2a #d8ffd0 #d8ffd0 #3a7a2a"></div><div class="a" style="left:743px;top:641px;width:18px;height:18px;background:#66ff00;border-style:solid;border-width:2px;border-color:#3a7a2a #d8ffd0 #d8ffd0 #3a7a2a"></div><div class="a" style="left:763px;top:641px;width:18px;height:18px;background:#66ff00;border-style:solid;border-width:2px;border-color:#3a7a2a #d8ffd0 #d8ffd0 #3a7a2a"></div><div class="a" style="left:783px;top:641px;width:18px;height:18px;background:#66ff00;border-style:solid;border-width:2px;border-color:#3a7a2a #d8ffd0 #d8ffd0 #3a7a2a"></div><div class="a" style="left:803px;top:641px;width:18px;height:18px;background:#ff0000;border-style:solid;border-width:2px;border-color:#ffc8c8 #7a3030 #7a3030 #ffc8c8"></div><div class="a" style="left:823px;top:641px;width:18px;height:18px;background:#ff0000;border-style:solid;border-width:2px;border-color:#ffc8c8 #7a3030 #7a3030 #ffc8c8"></div><div class="a" style="left:843px;top:641px;width:18px;height:18px;background:#ff0000;border-style:solid;border-width:2px;border-color:#ffc8c8 #7a3030 #7a3030 #ffc8c8"></div><div class="a" style="left:863px;top:641px;width:18px;height:18px;background:#ff0000;border-style:solid;border-width:2px;border-color:#ffc8c8 #7a3030 #7a3030 #ffc8c8"></div><div class="a" style="left:883px;top:641px;width:18px;height:18px;background:#66ff00;border-style:solid;border-width:2px;border-color:#3a7a2a #d8ffd0 #d8ffd0 #3a7a2a"></div><div class="a" style="left:903px;top:641px;width:18px;height:18px;background:#66ff00;border-style:solid;border-width:2px;border-color:#3a7a2a #d8ffd0 #d8ffd0 #3a7a2a"></div><div class="a" style="left:923px;top:641px;width:18px;height:18px;background:#66ff00;border-style:solid;border-width:2px;border-color:#3a7a2a #d8ffd0 #d8ffd0 #3a7a2a"></div><div class="a" style="left:943px;top:641px;width:18px;height:18px;background:#66ff00;border-style:solid;border-width:2px;border-color:#3a7a2a #d8ffd0 #d8ffd0 #3a7a2a"></div><div class="a" style="left:323px;top:661px;width:18px;height:18px;background:#66ff00;border-style:solid;border-width:2px;border-color:#3a7a2a #d8ffd0 #d8ffd0 #3a7a2a"></div><div class="a" style="left:343px;top:661px;width:18px;height:18px;background:#66ff00;border-style:solid;border-width:2px;border-color:#3a7a2a #d8ffd0 #d8ffd0 #3a7a2a"></div><div class="a" style="left:363px;top:661px;width:18px;height:18px;background:#66ff00;border-style:solid;border-width:2px;border-color:#3a7a2a #d8ffd0 #d8ffd0 #3a7a2a"></div><div class="a" style="left:383px;top:661px;width:18px;height:18px;background:#66ff00;border-style:solid;border-width:2px;border-color:#3a7a2a #d8ffd0 #d8ffd0 #3a7a2a"></div><div class="a" style="left:403px;top:661px;width:18px;height:18px;background:#66ff00;border-style:solid;border-width:2px;border-color:#3a7a2a #d8ffd0 #d8ffd0 #3a7a2a"></div><div class="a" style="left:423px;top:661px;width:18px;height:18px;background:#66ff00;border-style:solid;border-width:2px;border-color:#3a7a2a #d8ffd0 #d8ffd0 #3a7a2a"></div><div class="a" style="left:443px;top:661px;width:18px;height:18px;background:#66ff00;border-style:solid;border-width:2px;border-color:#3a7a2a #d8ffd0 #d8ffd0 #3a7a2a"></div><div class="a" style="left:463px;top:661px;width:18px;height:18px;background:#66ff00;border-style:solid;border-width:2px;border-color:#3a7a2a #d8ffd0 #d8ffd0 #3a7a2a"></div><div class="a" style="left:483px;top:661px;width:18px;height:18px;background:#66ff00;border-style:solid;border-width:2px;border-color:#3a7a2a #d8ffd0 #d8ffd0 #3a7a2a"></div><div class="a" style="left:503px;top:661px;width:18px;height:18px;background:#66ff00;border-style:solid;border-width:2px;border-color:#3a7a2a #d8ffd0 #d8ffd0 #3a7a2a"></div><div class="a" style="left:523px;top:661px;width:18px;height:18px;background:#66ff00;border-style:solid;border-width:2px;border-color:#3a7a2a #d8ffd0 #d8ffd0 #3a7a2a"></div><div class="a" style="left:543px;top:661px;width:18px;height:18px;background:#66ff00;border-style:solid;border-width:2px;border-color:#3a7a2a #d8ffd0 #d8ffd0 #3a7a2a"></div><div class="a" style="left:563px;top:661px;width:18px;height:18px;background:#66ff00;border-style:solid;border-width:2px;border-color:#3a7a2a #d8ffd0 #d8ffd0 #3a7a2a"></div><div class="a" style="left:583px;top:661px;width:18px;height:18px;background:#66ff00;border-style:solid;border-width:2px;border-color:#3a7a2a #d8ffd0 #d8ffd0 #3a7a2a"></div><div class="a" style="left:603px;top:661px;width:18px;height:18px;background:#66ff00;border-style:solid;border-width:2px;border-color:#3a7a2a #d8ffd0 #d8ffd0 #3a7a2a"></div><div class="a" style="left:623px;top:661px;width:18px;height:18px;background:#66ff00;border-style:solid;border-width:2px;border-color:#3a7a2a #d8ffd0 #d8ffd0 #3a7a2a"></div><div class="a" style="left:643px;top:661px;width:18px;height:18px;background:#66ff00;border-style:solid;border-width:2px;border-color:#3a7a2a #d8ffd0 #d8ffd0 #3a7a2a"></div><div class="a" style="left:663px;top:661px;width:18px;height:18px;background:#66ff00;border-style:solid;border-width:2px;border-color:#3a7a2a #d8ffd0 #d8ffd0 #3a7a2a"></div><div class="a" style="left:683px;top:661px;width:18px;height:18px;background:#66ff00;border-style:solid;border-width:2px;border-color:#3a7a2a #d8ffd0 #d8ffd0 #3a7a2a"></div><div class="a" style="left:703px;top:661px;width:18px;height:18px;background:#66ff00;border-style:solid;border-width:2px;border-color:#3a7a2a #d8ffd0 #d8ffd0 #3a7a2a"></div><div class="a" style="left:723px;top:661px;width:18px;height:18px;background:#66ff00;border-style:solid;border-width:2px;border-color:#3a7a2a #d8ffd0 #d8ffd0 #3a7a2a"></div><div class="a" style="left:743px;top:661px;width:18px;height:18px;background:#66ff00;border-style:solid;border-width:2px;border-color:#3a7a2a #d8ffd0 #d8ffd0 #3a7a2a"></div><div class="a" style="left:763px;top:661px;width:18px;height:18px;background:#66ff00;border-style:solid;border-width:2px;border-color:#3a7a2a #d8ffd0 #d8ffd0 #3a7a2a"></div><div class="a" style="left:783px;top:661px;width:18px;height:18px;background:#66ff00;border-style:solid;border-width:2px;border-color:#3a7a2a #d8ffd0 #d8ffd0 #3a7a2a"></div><div class="a" style="left:803px;top:661px;width:18px;height:18px;background:#66ff00;border-style:solid;border-width:2px;border-color:#3a7a2a #d8ffd0 #d8ffd0 #3a7a2a"></div><div class="a" style="left:823px;top:661px;width:18px;height:18px;background:#66ff00;border-style:solid;border-width:2px;border-color:#3a7a2a #d8ffd0 #d8ffd0 #3a7a2a"></div><div class="a" style="left:843px;top:661px;width:18px;height:18px;background:#66ff00;border-style:solid;border-width:2px;border-color:#3a7a2a #d8ffd0 #d8ffd0 #3a7a2a"></div><div class="a" style="left:863px;top:661px;width:18px;height:18px;background:#66ff00;border-style:solid;border-width:2px;border-color:#3a7a2a #d8ffd0 #d8ffd0 #3a7a2a"></div><div class="a" style="left:883px;top:661px;width:18px;height:18px;background:#ff0000;border-style:solid;border-width:2px;border-color:#ffc8c8 #7a3030 #7a3030 #ffc8c8"></div><div class="a" style="left:903px;top:661px;width:18px;height:18px;background:#ff0000;border-style:solid;border-width:2px;border-color:#ffc8c8 #7a3030 #7a3030 #ffc8c8"></div><div class="a" style="left:923px;top:661px;width:18px;height:18px;background:#ff0000;border-style:solid;border-width:2px;border-color:#ffc8c8 #7a3030 #7a3030 #ffc8c8"></div><div class="a" style="left:943px;top:661px;width:18px;height:18px;background:#ff0000;border-style:solid;border-width:2px;border-color:#ffc8c8 #7a3030 #7a3030 #ffc8c8"></div>
<div class="a t" style="left:170.92px;top:718.00px;font-size:13.43px;font-weight:bold;-webkit-text-stroke:0.35px #000;color:#000;transform:scaleX(0.899);transform-origin:0 0;">DELAY_BOARD</div>
<div class="a" style="left:195px;top:735px;width:49px;height:23px;background:#b0b0b0;border-style:solid;border-width:1px;border-color:#d8d8d8 #747474 #747474 #d8d8d8;box-shadow:inset 1px 1px 0 #5e5e5e,inset -1px -1px 0 #e6e6e6"></div>
<div class="a t" style="left:196.73px;top:740.00px;font-size:14.14px;font-weight:bold;-webkit-text-stroke:0.35px #000;color:#000;transform:scaleX(0.910);transform-origin:0 0;">10.30</div>
<div class="a t" style="left:793.12px;top:718.00px;font-size:13.14px;font-weight:bold;-webkit-text-stroke:0.35px #000;color:#000;transform:scaleX(0.916);transform-origin:0 0;">PW_BOARD</div>
<div class="a" style="left:799px;top:736px;width:50px;height:22px;background:#b0b0b0;border-style:solid;border-width:1px;border-color:#d8d8d8 #747474 #747474 #d8d8d8;box-shadow:inset 1px 1px 0 #5e5e5e,inset -1px -1px 0 #e6e6e6"></div>
<div class="a t" style="left:801.93px;top:741.00px;font-size:13.57px;font-weight:bold;-webkit-text-stroke:0.35px #000;color:#000;transform:scaleX(0.941);transform-origin:0 0;">106.57</div>
<div class="a t" style="left:307.80px;top:716.00px;font-size:13.00px;font-weight:bold;-webkit-text-stroke:0.35px #000;color:#000;transform:scaleX(0.946);transform-origin:0 0;">DT_BOARD</div>
<div class="a" style="left:322px;top:731px;width:54px;height:26px;background:#d2d2d2;background-clip:padding-box;border-style:solid;border-width:3px;border-color:#dadada #fff #fff #dadada"></div>
<div class="a t" style="left:327.27px;top:740.00px;font-size:11.86px;font-weight:bold;-webkit-text-stroke:0.35px #000;color:#000;transform:scaleX(1.119);transform-origin:0 0;">0.74</div>
<div class="a t" style="left:444.27px;top:717.00px;font-size:12.55px;font-weight:bold;-webkit-text-stroke:0.35px #000;color:#000;transform:scaleX(1.004);transform-origin:0 0;">TimeCode</div>
<div class="a" style="left:442px;top:731px;width:56px;height:26px;background:#d2d2d2;background-clip:padding-box;border-style:solid;border-width:3px;border-color:#dadada #fff #fff #dadada"></div>
<div class="a t" style="left:448.35px;top:739.00px;font-size:12.03px;font-weight:bold;-webkit-text-stroke:0.35px #000;color:#000;transform:scaleX(0.964);transform-origin:0 0;">5</div>
<div class="a t" style="left:904.00px;top:716.00px;font-size:13.14px;font-weight:bold;-webkit-text-stroke:0.35px #000;color:#000;transform:scaleX(0.939);transform-origin:0 0;">DT_PWBOARD</div>
<div class="a" style="left:903px;top:731px;width:53px;height:26px;background:#d2d2d2;background-clip:padding-box;border-style:solid;border-width:3px;border-color:#dadada #fff #fff #dadada"></div>
<div class="a t" style="left:909.13px;top:739.00px;font-size:11.86px;font-weight:bold;-webkit-text-stroke:0.35px #000;color:#000;transform:scaleX(1.075);transform-origin:0 0;">12.72</div>
<div class="a t" style="left:195.04px;top:822.00px;font-size:10.62px;font-weight:bold;-webkit-text-stroke:0.35px #000;color:#000;transform:scaleX(1.105);transform-origin:0 0;">MeanDelChip</div>
<div class="a" style="left:194px;top:835px;width:440px;height:108px;background:#a4a4a4;border:4px solid #d0d0d0;border-right-color:#b8b8b8;border-bottom-color:#b8b8b8"></div>
<div class="a" style="left:198px;top:839px;width:54px;height:25px;background:#d6d6d6;border-style:solid;border-width:4px;border-color:#8c8c8c #b2b2b2 #b2b2b2 #8c8c8c"></div><div class="a" style="left:252px;top:839px;width:54px;height:25px;background:#d6d6d6;border-style:solid;border-width:4px;border-color:#8c8c8c #b2b2b2 #b2b2b2 #8c8c8c"></div><div class="a" style="left:306px;top:839px;width:54px;height:25px;background:#d6d6d6;border-style:solid;border-width:4px;border-color:#8c8c8c #b2b2b2 #b2b2b2 #8c8c8c"></div><div class="a" style="left:360px;top:839px;width:54px;height:25px;background:#d6d6d6;border-style:solid;border-width:4px;border-color:#8c8c8c #b2b2b2 #b2b2b2 #8c8c8c"></div><div class="a" style="left:414px;top:839px;width:54px;height:25px;background:#d6d6d6;border-style:solid;border-width:4px;border-color:#8c8c8c #b2b2b2 #b2b2b2 #8c8c8c"></div><div class="a" style="left:468px;top:839px;width:54px;height:25px;background:#d6d6d6;border-style:solid;border-width:4px;border-color:#8c8c8c #b2b2b2 #b2b2b2 #8c8c8c"></div><div class="a" style="left:522px;top:839px;width:54px;height:25px;background:#d6d6d6;border-style:solid;border-width:4px;border-color:#8c8c8c #b2b2b2 #b2b2b2 #8c8c8c"></div><div class="a" style="left:576px;top:839px;width:54px;height:25px;background:#d6d6d6;border-style:solid;border-width:4px;border-color:#8c8c8c #b2b2b2 #b2b2b2 #8c8c8c"></div><div class="a" style="left:198px;top:864px;width:54px;height:25px;background:#d6d6d6;border-style:solid;border-width:4px;border-color:#8c8c8c #b2b2b2 #b2b2b2 #8c8c8c"></div><div class="a" style="left:252px;top:864px;width:54px;height:25px;background:#d6d6d6;border-style:solid;border-width:4px;border-color:#8c8c8c #b2b2b2 #b2b2b2 #8c8c8c"></div><div class="a" style="left:306px;top:864px;width:54px;height:25px;background:#d6d6d6;border-style:solid;border-width:4px;border-color:#8c8c8c #b2b2b2 #b2b2b2 #8c8c8c"></div><div class="a" style="left:360px;top:864px;width:54px;height:25px;background:#d6d6d6;border-style:solid;border-width:4px;border-color:#8c8c8c #b2b2b2 #b2b2b2 #8c8c8c"></div><div class="a" style="left:414px;top:864px;width:54px;height:25px;background:#d6d6d6;border-style:solid;border-width:4px;border-color:#8c8c8c #b2b2b2 #b2b2b2 #8c8c8c"></div><div class="a" style="left:468px;top:864px;width:54px;height:25px;background:#d6d6d6;border-style:solid;border-width:4px;border-color:#8c8c8c #b2b2b2 #b2b2b2 #8c8c8c"></div><div class="a" style="left:522px;top:864px;width:54px;height:25px;background:#d6d6d6;border-style:solid;border-width:4px;border-color:#8c8c8c #b2b2b2 #b2b2b2 #8c8c8c"></div><div class="a" style="left:576px;top:864px;width:54px;height:25px;background:#d6d6d6;border-style:solid;border-width:4px;border-color:#8c8c8c #b2b2b2 #b2b2b2 #8c8c8c"></div><div class="a" style="left:198px;top:889px;width:54px;height:25px;background:#d6d6d6;border-style:solid;border-width:4px;border-color:#8c8c8c #b2b2b2 #b2b2b2 #8c8c8c"></div><div class="a" style="left:252px;top:889px;width:54px;height:25px;background:#d6d6d6;border-style:solid;border-width:4px;border-color:#8c8c8c #b2b2b2 #b2b2b2 #8c8c8c"></div><div class="a" style="left:306px;top:889px;width:54px;height:25px;background:#d6d6d6;border-style:solid;border-width:4px;border-color:#8c8c8c #b2b2b2 #b2b2b2 #8c8c8c"></div><div class="a" style="left:360px;top:889px;width:54px;height:25px;background:#d6d6d6;border-style:solid;border-width:4px;border-color:#8c8c8c #b2b2b2 #b2b2b2 #8c8c8c"></div><div class="a" style="left:414px;top:889px;width:54px;height:25px;background:#d6d6d6;border-style:solid;border-width:4px;border-color:#8c8c8c #b2b2b2 #b2b2b2 #8c8c8c"></div><div class="a" style="left:468px;top:889px;width:54px;height:25px;background:#d6d6d6;border-style:solid;border-width:4px;border-color:#8c8c8c #b2b2b2 #b2b2b2 #8c8c8c"></div><div class="a" style="left:522px;top:889px;width:54px;height:25px;background:#d6d6d6;border-style:solid;border-width:4px;border-color:#8c8c8c #b2b2b2 #b2b2b2 #8c8c8c"></div><div class="a" style="left:576px;top:889px;width:54px;height:25px;background:#d6d6d6;border-style:solid;border-width:4px;border-color:#8c8c8c #b2b2b2 #b2b2b2 #8c8c8c"></div><div class="a" style="left:198px;top:914px;width:54px;height:25px;background:#d6d6d6;border-style:solid;border-width:4px;border-color:#8c8c8c #b2b2b2 #b2b2b2 #8c8c8c"></div><div class="a" style="left:252px;top:914px;width:54px;height:25px;background:#d6d6d6;border-style:solid;border-width:4px;border-color:#8c8c8c #b2b2b2 #b2b2b2 #8c8c8c"></div><div class="a" style="left:306px;top:914px;width:54px;height:25px;background:#d6d6d6;border-style:solid;border-width:4px;border-color:#8c8c8c #b2b2b2 #b2b2b2 #8c8c8c"></div><div class="a" style="left:360px;top:914px;width:54px;height:25px;background:#d6d6d6;border-style:solid;border-width:4px;border-color:#8c8c8c #b2b2b2 #b2b2b2 #8c8c8c"></div><div class="a" style="left:414px;top:914px;width:54px;height:25px;background:#d6d6d6;border-style:solid;border-width:4px;border-color:#8c8c8c #b2b2b2 #b2b2b2 #8c8c8c"></div><div class="a" style="left:468px;top:914px;width:54px;height:25px;background:#d6d6d6;border-style:solid;border-width:4px;border-color:#8c8c8c #b2b2b2 #b2b2b2 #8c8c8c"></div><div class="a" style="left:522px;top:914px;width:54px;height:25px;background:#d6d6d6;border-style:solid;border-width:4px;border-color:#8c8c8c #b2b2b2 #b2b2b2 #8c8c8c"></div><div class="a" style="left:576px;top:914px;width:54px;height:25px;background:#d6d6d6;border-style:solid;border-width:4px;border-color:#8c8c8c #b2b2b2 #b2b2b2 #8c8c8c"></div>
<div class="a t" style="left:203.16px;top:846.00px;font-size:12.14px;color:#0a0a28;transform:scaleX(0.917);transform-origin:0 0;">10.29</div>
<div class="a t" style="left:257.16px;top:846.00px;font-size:12.14px;color:#0a0a28;transform:scaleX(0.917);transform-origin:0 0;">10.12</div>
<div class="a t" style="left:311.50px;top:846.00px;font-size:12.14px;color:#0a0a28;transform:scaleX(0.917);transform-origin:0 0;">9.93</div>
<div class="a t" style="left:365.16px;top:846.00px;font-size:12.14px;color:#0a0a28;transform:scaleX(0.917);transform-origin:0 0;">10.10</div>
<div class="a t" style="left:419.16px;top:846.00px;font-size:12.14px;color:#0a0a28;transform:scaleX(0.917);transform-origin:0 0;">10.16</div>
<div class="a t" style="left:473.16px;top:846.00px;font-size:12.14px;color:#0a0a28;transform:scaleX(0.917);transform-origin:0 0;">10.05</div>
<div class="a t" style="left:527.16px;top:846.00px;font-size:12.14px;color:#0a0a28;transform:scaleX(0.917);transform-origin:0 0;">10.16</div>
<div class="a t" style="left:581.50px;top:846.00px;font-size:12.14px;color:#0a0a28;transform:scaleX(0.917);transform-origin:0 0;">9.98</div>
<div class="a t" style="left:203.16px;top:871.00px;font-size:12.14px;color:#0a0a28;transform:scaleX(0.917);transform-origin:0 0;">10.13</div>
<div class="a t" style="left:257.16px;top:871.00px;font-size:12.14px;color:#0a0a28;transform:scaleX(0.917);transform-origin:0 0;">10.13</div>
<div class="a t" style="left:311.16px;top:871.00px;font-size:12.14px;color:#0a0a28;transform:scaleX(0.917);transform-origin:0 0;">10.10</div>
<div class="a t" style="left:365.16px;top:871.00px;font-size:12.14px;color:#0a0a28;transform:scaleX(0.917);transform-origin:0 0;">10.01</div>
<div class="a t" style="left:419.16px;top:871.00px;font-size:12.14px;color:#0a0a28;transform:scaleX(0.917);transform-origin:0 0;">10.11</div>
<div class="a t" style="left:473.16px;top:871.00px;font-size:12.14px;color:#0a0a28;transform:scaleX(0.917);transform-origin:0 0;">10.17</div>
<div class="a t" style="left:527.16px;top:871.00px;font-size:12.14px;color:#0a0a28;transform:scaleX(0.917);transform-origin:0 0;">10.26</div>
<div class="a t" style="left:581.16px;top:871.00px;font-size:12.14px;color:#0a0a28;transform:scaleX(0.917);transform-origin:0 0;">10.28</div>
<div class="a t" style="left:203.16px;top:896.00px;font-size:12.14px;color:#0a0a28;transform:scaleX(0.917);transform-origin:0 0;">10.08</div>
<div class="a t" style="left:257.16px;top:896.00px;font-size:12.14px;color:#0a0a28;transform:scaleX(0.917);transform-origin:0 0;">10.17</div>
<div class="a t" style="left:311.16px;top:896.00px;font-size:12.14px;color:#0a0a28;transform:scaleX(0.917);transform-origin:0 0;">10.12</div>
<div class="a t" style="left:365.50px;top:896.00px;font-size:12.14px;color:#0a0a28;transform:scaleX(0.917);transform-origin:0 0;">9.99</div>
<div class="a t" style="left:419.16px;top:896.00px;font-size:12.14px;color:#0a0a28;transform:scaleX(0.917);transform-origin:0 0;">10.17</div>
<div class="a t" style="left:473.16px;top:896.00px;font-size:12.14px;color:#0a0a28;transform:scaleX(0.917);transform-origin:0 0;">10.25</div>
<div class="a t" style="left:527.16px;top:896.00px;font-size:12.14px;color:#0a0a28;transform:scaleX(0.917);transform-origin:0 0;">10.22</div>
<div class="a t" style="left:581.16px;top:896.00px;font-size:12.14px;color:#0a0a28;transform:scaleX(0.917);transform-origin:0 0;">10.46</div>
<div class="a t" style="left:203.16px;top:921.00px;font-size:12.14px;color:#0a0a28;transform:scaleX(0.917);transform-origin:0 0;">10.23</div>
<div class="a t" style="left:257.16px;top:921.00px;font-size:12.14px;color:#0a0a28;transform:scaleX(0.917);transform-origin:0 0;">10.47</div>
<div class="a t" style="left:311.16px;top:921.00px;font-size:12.14px;color:#0a0a28;transform:scaleX(0.917);transform-origin:0 0;">10.24</div>
<div class="a t" style="left:365.16px;top:921.00px;font-size:12.14px;color:#0a0a28;transform:scaleX(0.917);transform-origin:0 0;">10.12</div>
<div class="a t" style="left:419.16px;top:921.00px;font-size:12.14px;color:#0a0a28;transform:scaleX(0.917);transform-origin:0 0;">10.25</div>
<div class="a t" style="left:473.16px;top:921.00px;font-size:12.14px;color:#0a0a28;transform:scaleX(0.917);transform-origin:0 0;">10.37</div>
<div class="a t" style="left:527.16px;top:921.00px;font-size:12.14px;color:#0a0a28;transform:scaleX(0.917);transform-origin:0 0;">10.23</div>
<div class="a t" style="left:581.16px;top:921.00px;font-size:12.14px;color:#0a0a28;transform:scaleX(0.917);transform-origin:0 0;">10.68</div>
<div class="a t" style="left:156.85px;top:851.00px;font-size:11.72px;font-weight:bold;-webkit-text-stroke:0.35px #000;color:#000;transform:scaleX(0.965);transform-origin:0 0;">Chip0</div>
<div class="a t" style="left:156.85px;top:876.00px;font-size:11.72px;font-weight:bold;-webkit-text-stroke:0.35px #000;color:#000;transform:scaleX(0.960);transform-origin:0 0;">Chip1</div>
<div class="a t" style="left:156.85px;top:899.00px;font-size:11.72px;font-weight:bold;-webkit-text-stroke:0.35px #000;color:#000;transform:scaleX(0.965);transform-origin:0 0;">Chip2</div>
<div class="a t" style="left:156.85px;top:922.00px;font-size:11.72px;font-weight:bold;-webkit-text-stroke:0.35px #000;color:#000;transform:scaleX(0.964);transform-origin:0 0;">Chip3</div>
<div class="a t" style="left:193.91px;top:948.00px;font-size:12.00px;color:#101010;transform:scaleX(1.019);transform-origin:0 0;">meandel</div>
<div class="a t" style="left:699.05px;top:824.00px;font-size:11.31px;font-weight:bold;-webkit-text-stroke:0.35px #000;color:#000;transform:scaleX(1.021);transform-origin:0 0;">MeanPWChip</div>
<div class="a" style="left:698px;top:838px;width:440px;height:108px;background:#a4a4a4;border:4px solid #d0d0d0;border-right-color:#b8b8b8;border-bottom-color:#b8b8b8"></div>
<div class="a" style="left:702px;top:842px;width:54px;height:25px;background:#d6d6d6;border-style:solid;border-width:4px;border-color:#8c8c8c #b2b2b2 #b2b2b2 #8c8c8c"></div><div class="a" style="left:756px;top:842px;width:54px;height:25px;background:#d6d6d6;border-style:solid;border-width:4px;border-color:#8c8c8c #b2b2b2 #b2b2b2 #8c8c8c"></div><div class="a" style="left:810px;top:842px;width:54px;height:25px;background:#d6d6d6;border-style:solid;border-width:4px;border-color:#8c8c8c #b2b2b2 #b2b2b2 #8c8c8c"></div><div class="a" style="left:864px;top:842px;width:54px;height:25px;background:#d6d6d6;border-style:solid;border-width:4px;border-color:#8c8c8c #b2b2b2 #b2b2b2 #8c8c8c"></div><div class="a" style="left:918px;top:842px;width:54px;height:25px;background:#d6d6d6;border-style:solid;border-width:4px;border-color:#8c8c8c #b2b2b2 #b2b2b2 #8c8c8c"></div><div class="a" style="left:972px;top:842px;width:54px;height:25px;background:#d6d6d6;border-style:solid;border-width:4px;border-color:#8c8c8c #b2b2b2 #b2b2b2 #8c8c8c"></div><div class="a" style="left:1026px;top:842px;width:54px;height:25px;background:#d6d6d6;border-style:solid;border-width:4px;border-color:#8c8c8c #b2b2b2 #b2b2b2 #8c8c8c"></div><div class="a" style="left:1080px;top:842px;width:54px;height:25px;background:#d6d6d6;border-style:solid;border-width:4px;border-color:#8c8c8c #b2b2b2 #b2b2b2 #8c8c8c"></div><div class="a" style="left:702px;top:867px;width:54px;height:25px;background:#d6d6d6;border-style:solid;border-width:4px;border-color:#8c8c8c #b2b2b2 #b2b2b2 #8c8c8c"></div><div class="a" style="left:756px;top:867px;width:54px;height:25px;background:#d6d6d6;border-style:solid;border-width:4px;border-color:#8c8c8c #b2b2b2 #b2b2b2 #8c8c8c"></div><div class="a" style="left:810px;top:867px;width:54px;height:25px;background:#d6d6d6;border-style:solid;border-width:4px;border-color:#8c8c8c #b2b2b2 #b2b2b2 #8c8c8c"></div><div class="a" style="left:864px;top:867px;width:54px;height:25px;background:#d6d6d6;border-style:solid;border-width:4px;border-color:#8c8c8c #b2b2b2 #b2b2b2 #8c8c8c"></div><div class="a" style="left:918px;top:867px;width:54px;height:25px;background:#d6d6d6;border-style:solid;border-width:4px;border-color:#8c8c8c #b2b2b2 #b2b2b2 #8c8c8c"></div><div class="a" style="left:972px;top:867px;width:54px;height:25px;background:#d6d6d6;border-style:solid;border-width:4px;border-color:#8c8c8c #b2b2b2 #b2b2b2 #8c8c8c"></div><div class="a" style="left:1026px;top:867px;width:54px;height:25px;background:#d6d6d6;border-style:solid;border-width:4px;border-color:#8c8c8c #b2b2b2 #b2b2b2 #8c8c8c"></div><div class="a" style="left:1080px;top:867px;width:54px;height:25px;background:#d6d6d6;border-style:solid;border-width:4px;border-color:#8c8c8c #b2b2b2 #b2b2b2 #8c8c8c"></div><div class="a" style="left:702px;top:892px;width:54px;height:25px;background:#d6d6d6;border-style:solid;border-width:4px;border-color:#8c8c8c #b2b2b2 #b2b2b2 #8c8c8c"></div><div class="a" style="left:756px;top:892px;width:54px;height:25px;background:#d6d6d6;border-style:solid;border-width:4px;border-color:#8c8c8c #b2b2b2 #b2b2b2 #8c8c8c"></div><div class="a" style="left:810px;top:892px;width:54px;height:25px;background:#d6d6d6;border-style:solid;border-width:4px;border-color:#8c8c8c #b2b2b2 #b2b2b2 #8c8c8c"></div><div class="a" style="left:864px;top:892px;width:54px;height:25px;background:#d6d6d6;border-style:solid;border-width:4px;border-color:#8c8c8c #b2b2b2 #b2b2b2 #8c8c8c"></div><div class="a" style="left:918px;top:892px;width:54px;height:25px;background:#d6d6d6;border-style:solid;border-width:4px;border-color:#8c8c8c #b2b2b2 #b2b2b2 #8c8c8c"></div><div class="a" style="left:972px;top:892px;width:54px;height:25px;background:#d6d6d6;border-style:solid;border-width:4px;border-color:#8c8c8c #b2b2b2 #b2b2b2 #8c8c8c"></div><div class="a" style="left:1026px;top:892px;width:54px;height:25px;background:#d6d6d6;border-style:solid;border-width:4px;border-color:#8c8c8c #b2b2b2 #b2b2b2 #8c8c8c"></div><div class="a" style="left:1080px;top:892px;width:54px;height:25px;background:#d6d6d6;border-style:solid;border-width:4px;border-color:#8c8c8c #b2b2b2 #b2b2b2 #8c8c8c"></div><div class="a" style="left:702px;top:917px;width:54px;height:25px;background:#d6d6d6;border-style:solid;border-width:4px;border-color:#8c8c8c #b2b2b2 #b2b2b2 #8c8c8c"></div><div class="a" style="left:756px;top:917px;width:54px;height:25px;background:#d6d6d6;border-style:solid;border-width:4px;border-color:#8c8c8c #b2b2b2 #b2b2b2 #8c8c8c"></div><div class="a" style="left:810px;top:917px;width:54px;height:25px;background:#d6d6d6;border-style:solid;border-width:4px;border-color:#8c8c8c #b2b2b2 #b2b2b2 #8c8c8c"></div><div class="a" style="left:864px;top:917px;width:54px;height:25px;background:#d6d6d6;border-style:solid;border-width:4px;border-color:#8c8c8c #b2b2b2 #b2b2b2 #8c8c8c"></div><div class="a" style="left:918px;top:917px;width:54px;height:25px;background:#d6d6d6;border-style:solid;border-width:4px;border-color:#8c8c8c #b2b2b2 #b2b2b2 #8c8c8c"></div><div class="a" style="left:972px;top:917px;width:54px;height:25px;background:#d6d6d6;border-style:solid;border-width:4px;border-color:#8c8c8c #b2b2b2 #b2b2b2 #8c8c8c"></div><div class="a" style="left:1026px;top:917px;width:54px;height:25px;background:#d6d6d6;border-style:solid;border-width:4px;border-color:#8c8c8c #b2b2b2 #b2b2b2 #8c8c8c"></div><div class="a" style="left:1080px;top:917px;width:54px;height:25px;background:#d6d6d6;border-style:solid;border-width:4px;border-color:#8c8c8c #b2b2b2 #b2b2b2 #8c8c8c"></div>
<div class="a t" style="left:707.16px;top:849.00px;font-size:12.14px;color:#0a0a28;transform:scaleX(0.917);transform-origin:0 0;">105.16</div>
<div class="a t" style="left:761.16px;top:849.00px;font-size:12.14px;color:#0a0a28;transform:scaleX(0.917);transform-origin:0 0;">103.14</div>
<div class="a t" style="left:815.16px;top:849.00px;font-size:12.14px;color:#0a0a28;transform:scaleX(0.917);transform-origin:0 0;">105.77</div>
<div class="a t" style="left:869.16px;top:849.00px;font-size:12.14px;color:#0a0a28;transform:scaleX(0.917);transform-origin:0 0;">106.97</div>
<div class="a t" style="left:923.16px;top:849.00px;font-size:12.14px;color:#0a0a28;transform:scaleX(0.917);transform-origin:0 0;">108.62</div>
<div class="a t" style="left:977.16px;top:849.00px;font-size:12.14px;color:#0a0a28;transform:scaleX(0.917);transform-origin:0 0;">105.95</div>
<div class="a t" style="left:1031.16px;top:849.00px;font-size:12.14px;color:#0a0a28;transform:scaleX(0.917);transform-origin:0 0;">107.11</div>
<div class="a t" style="left:1085.16px;top:849.00px;font-size:12.14px;color:#0a0a28;transform:scaleX(0.917);transform-origin:0 0;">109.62</div>
<div class="a t" style="left:707.16px;top:874.00px;font-size:12.14px;color:#0a0a28;transform:scaleX(0.917);transform-origin:0 0;">102.49</div>
<div class="a t" style="left:761.16px;top:874.00px;font-size:12.14px;color:#0a0a28;transform:scaleX(0.917);transform-origin:0 0;">101.80</div>
<div class="a t" style="left:815.16px;top:874.00px;font-size:12.14px;color:#0a0a28;transform:scaleX(0.917);transform-origin:0 0;">108.83</div>
<div class="a t" style="left:869.16px;top:874.00px;font-size:12.14px;color:#0a0a28;transform:scaleX(0.917);transform-origin:0 0;">103.65</div>
<div class="a t" style="left:923.16px;top:874.00px;font-size:12.14px;color:#0a0a28;transform:scaleX(0.917);transform-origin:0 0;">108.68</div>
<div class="a t" style="left:977.16px;top:874.00px;font-size:12.14px;color:#0a0a28;transform:scaleX(0.917);transform-origin:0 0;">107.62</div>
<div class="a t" style="left:1031.16px;top:874.00px;font-size:12.14px;color:#0a0a28;transform:scaleX(0.917);transform-origin:0 0;">106.03</div>
<div class="a t" style="left:1085.50px;top:874.00px;font-size:12.14px;color:#0a0a28;transform:scaleX(0.917);transform-origin:0 0;">98.60</div>
<div class="a t" style="left:707.16px;top:899.00px;font-size:12.14px;color:#0a0a28;transform:scaleX(0.917);transform-origin:0 0;">107.09</div>
<div class="a t" style="left:761.16px;top:899.00px;font-size:12.14px;color:#0a0a28;transform:scaleX(0.917);transform-origin:0 0;">106.58</div>
<div class="a t" style="left:815.16px;top:899.00px;font-size:12.14px;color:#0a0a28;transform:scaleX(0.917);transform-origin:0 0;">107.98</div>
<div class="a t" style="left:869.16px;top:899.00px;font-size:12.14px;color:#0a0a28;transform:scaleX(0.917);transform-origin:0 0;">107.11</div>
<div class="a t" style="left:923.16px;top:899.00px;font-size:12.14px;color:#0a0a28;transform:scaleX(0.917);transform-origin:0 0;">106.24</div>
<div class="a t" style="left:977.16px;top:899.00px;font-size:12.14px;color:#0a0a28;transform:scaleX(0.917);transform-origin:0 0;">105.30</div>
<div class="a t" style="left:1031.16px;top:899.00px;font-size:12.14px;color:#0a0a28;transform:scaleX(0.917);transform-origin:0 0;">104.16</div>
<div class="a t" style="left:1085.16px;top:899.00px;font-size:12.14px;color:#0a0a28;transform:scaleX(0.917);transform-origin:0 0;">105.41</div>
<div class="a t" style="left:707.16px;top:924.00px;font-size:12.14px;color:#0a0a28;transform:scaleX(0.917);transform-origin:0 0;">109.88</div>
<div class="a t" style="left:761.16px;top:924.00px;font-size:12.14px;color:#0a0a28;transform:scaleX(0.917);transform-origin:0 0;">108.81</div>
<div class="a t" style="left:815.16px;top:924.00px;font-size:12.14px;color:#0a0a28;transform:scaleX(0.917);transform-origin:0 0;">108.14</div>
<div class="a t" style="left:869.16px;top:924.00px;font-size:12.14px;color:#0a0a28;transform:scaleX(0.917);transform-origin:0 0;">108.57</div>
<div class="a t" style="left:923.16px;top:924.00px;font-size:12.14px;color:#0a0a28;transform:scaleX(0.917);transform-origin:0 0;">107.87</div>
<div class="a t" style="left:977.16px;top:924.00px;font-size:12.14px;color:#0a0a28;transform:scaleX(0.917);transform-origin:0 0;">109.69</div>
<div class="a t" style="left:1031.16px;top:924.00px;font-size:12.14px;color:#0a0a28;transform:scaleX(0.917);transform-origin:0 0;">111.32</div>
<div class="a t" style="left:1085.16px;top:924.00px;font-size:12.14px;color:#0a0a28;transform:scaleX(0.917);transform-origin:0 0;">105.92</div>
<div class="a t" style="left:660.75px;top:849.00px;font-size:11.72px;font-weight:bold;-webkit-text-stroke:0.35px #000;color:#000;transform:scaleX(0.962);transform-origin:0 0;">Chip0</div>
<div class="a t" style="left:660.75px;top:874.00px;font-size:11.72px;font-weight:bold;-webkit-text-stroke:0.35px #000;color:#000;transform:scaleX(0.957);transform-origin:0 0;">Chip1</div>
<div class="a t" style="left:660.75px;top:897.00px;font-size:11.72px;font-weight:bold;-webkit-text-stroke:0.35px #000;color:#000;transform:scaleX(0.962);transform-origin:0 0;">Chip2</div>
<div class="a t" style="left:660.75px;top:920.00px;font-size:11.72px;font-weight:bold;-webkit-text-stroke:0.35px #000;color:#000;transform:scaleX(0.960);transform-origin:0 0;">Chip3</div>
<div class="a" style="left:0;top:983px;width:1280px;height:41px;background:linear-gradient(90deg,#2a6e99 0%,#276895 25%,#245e8e 45%,#1f5286 65%,#1d4b80 80%,#1c4a7e 100%);border-top:1px solid #0e2a44"></div>
<div class="a" style="left:0;top:984px;width:1280px;height:1px;background:#6a92b4;opacity:.6"></div>
<div class="a" style="left:990px;top:984px;width:40px;height:40px;background:linear-gradient(100deg,transparent 20%,rgba(255,255,255,.18) 50%,transparent 80%)"></div>
<div class="a" style="left:8px;top:987px;width:37px;height:36px;border-radius:50%;background:radial-gradient(ellipse 60% 40% at 50% 92%,#30e0ff 0%,rgba(30,160,220,.6) 50%,transparent 100%),linear-gradient(#b8d0e0 0%,#7ea8c4 40%,#1a5a8a 50%,#0e4a7a 75%,#1a80b8 100%);border:1px solid #0a3050;box-shadow:0 0 0 1px rgba(150,200,230,.5)"></div>
<svg class="a" style="left:15px;top:992px" width="24" height="24" viewBox="0 0 24 24"><path d="M3 5Q6 3 10.5 4.5L9.5 11Q5.5 9.8 2.2 11.5Z" fill="#f06a2a"/><path d="M11.5 4.8Q16 6.5 20.5 4.3L19.5 11.2Q15 13 10.6 11.3Z" fill="#8cc63f"/><path d="M2 12.5Q5.5 10.8 9.4 12L8.4 18.6Q4.5 17.5 1.2 19Z" fill="#3ab0f0"/><path d="M10.4 12.3Q15 14 19.3 12.2L18.3 19Q14 20.8 9.4 19Z" fill="#fbc02d"/></svg>
<div class="a" style="left:60px;top:985px;width:90px;height:38px;border-radius:3px;background:linear-gradient(rgba(255,255,255,.28),rgba(255,255,255,.12) 45%,rgba(255,255,255,.05) 50%,rgba(255,255,255,.12));border:1px solid rgba(200,225,245,.65);box-shadow:inset 0 0 0 1px rgba(0,20,50,.35)"></div>
<svg class="a" style="left:66px;top:988px" width="32" height="32" viewBox="0 0 32 32"><defs><radialGradient id="gl" cx=".6" cy=".35" r=".6"><stop offset="0" stop-color="#6ac8f0"/><stop offset=".6" stop-color="#2a64b8"/><stop offset="1" stop-color="#1a3a80"/></radialGradient><linearGradient id="fx" x1="0" y1="0" x2="0" y2="1"><stop offset="0" stop-color="#f8b020"/><stop offset=".5" stop-color="#f06a18"/><stop offset="1" stop-color="#d83c10"/></linearGradient></defs><circle cx="15.5" cy="17" r="14" fill="url(#fx)"/><circle cx="18.5" cy="12.5" r="9.5" fill="url(#gl)"/><path d="M10 6C13 4 17 5 19 8C16 8 14 10 15 13C11 12.5 9.5 9 10 6Z" fill="#f5a020"/><path d="M3 4C2 7 2 10 3 12L7 8Z" fill="#f07a18"/></svg>
<div class="a t" style="left:101.61px;top:997.00px;font-size:13.71px;color:#fff;transform:scaleX(0.809);transform-origin:0 0;text-shadow:0 0 4px rgba(0,0,0,.6)">DFS - ...</div>
<div class="a t b" style="left:163px;top:986px;font-size:29px;font-family:'Liberation Serif',serif;color:#20f4f4;-webkit-text-stroke:1.2px #000">P</div>
<div class="a t b" style="left:175px;top:995px;font-size:29px;font-family:'Liberation Serif',serif;color:#20f4f4;-webkit-text-stroke:1.2px #000">L</div>
<svg class="a" style="left:218px;top:989px" width="32" height="31" viewBox="0 0 32 31"><path d="M4 14C2 14 1 12 2.5 10.5C3 8 6 7.5 8 8.5C9 5 12 3 16 3.5C19 1.5 24 2 26 4.5C29 4.5 31 7 30 10C31.5 12 30 14 28 14Z" fill="#a8a8a8" stroke="#909090" stroke-width=".6"/><rect x="2" y="13" width="28" height="2" fill="#111"/></svg>
<div class="a" style="left:221px;top:1005px;width:27px;height:14px;background:radial-gradient(circle,#b0b8c4 0.8px,transparent 1.1px) 0 0/3px 3px"></div>
<svg class="a" style="left:229px;top:1002px" width="11" height="18" viewBox="0 0 11 18"><path d="M7 0L1.5 9h4L2 18l8-11H6l3-7z" fill="#f8e020" stroke="#000" stroke-width=".7"/></svg>
<div class="a" style="left:264px;top:985px;width:90px;height:38px;border-radius:3px;background:linear-gradient(#8fb4d0,#6d98bc 45%,#5c8ab2 50%,#6f9cc0);border:1px solid rgba(200,225,245,.65);box-shadow:inset 0 0 0 1px rgba(0,20,50,.35)"></div>
<svg class="a" style="left:270px;top:988px" width="32" height="31" viewBox="0 0 32 31"><rect x="4" y="1" width="24" height="29" fill="#2a2a2a" stroke="#888" stroke-width="1"/><path d="M5 3H27M5 28H27" stroke="#ddd" stroke-width="1.5" stroke-dasharray="1.5 2"/><path d="M6 14Q10 6 14 14T22 14T27 12" stroke="#40c040" stroke-width="1.2" fill="none"/><path d="M0 11H8M0 18H8" stroke="#e04040" stroke-width="1.2"/><path d="M0 21H7" stroke="#4060e0" stroke-width="1.2"/><path d="M24 13H32" stroke="#e08080" stroke-width="1.2"/><path d="M8 6L25 14.5L8 23Z" fill="#f4e020" stroke="#000" stroke-width="1"/><path d="M11 14.5H16M13.5 12V17" stroke="#000" stroke-width="1.2"/></svg>
<div class="a t" style="left:305.83px;top:997.00px;font-size:13.24px;color:#fff;transform:scaleX(0.840);transform-origin:0 0;text-shadow:0 0 4px rgba(0,0,0,.6)">feb_te...</div>
<div class="a" style="left:358px;top:985px;width:90px;height:38px;border-radius:3px;background:linear-gradient(rgba(255,255,255,.28),rgba(255,255,255,.12) 45%,rgba(255,255,255,.05) 50%,rgba(255,255,255,.12));border:1px solid rgba(200,225,245,.65);box-shadow:inset 0 0 0 1px rgba(0,20,50,.35)"></div>
<div class="a" style="left:364px;top:989px;width:32px;height:31px;background:#fff"></div>
<div class="a" style="left:365px;top:992px;width:30px;height:6px;background:repeating-linear-gradient(90deg,#aaa 0 1px,#ddd 1px 2px);"></div>
<div class="a" style="left:364px;top:996px;width:32px;height:8px;background:radial-gradient(circle,#000 1.2px,transparent 1.4px) 0 0/2px 2px,#222;border-radius:40% 40% 30% 30%"></div>
<div class="a" style="left:365px;top:1005px;width:30px;height:14px;background:radial-gradient(circle,#4050b0 0.9px,transparent 1.1px) 0 0/3px 3px"></div>
<svg class="a" style="left:373px;top:1002px" width="10" height="16" viewBox="0 0 10 16"><path d="M7 0L2 8h4l-4 8 7-10H5l3-6z" fill="#1030e0"/></svg>
<div class="a t" style="left:404.95px;top:997.00px;font-size:13.91px;color:#fff;transform:scaleX(0.948);transform-origin:0 0;text-shadow:0 0 4px rgba(0,0,0,.6)">N,,--</div>
<div class="a" style="left:452px;top:985px;width:89px;height:38px;border-radius:3px;background:linear-gradient(rgba(255,255,255,.28),rgba(255,255,255,.12) 45%,rgba(255,255,255,.05) 50%,rgba(255,255,255,.12));border:1px solid rgba(200,225,245,.65);box-shadow:inset 0 0 0 1px rgba(0,20,50,.35)"></div>
<div class="a" style="left:459px;top:989px;width:28px;height:28px;border-radius:50%;background:#1ea0e8"></div>
<div class="a t b" style="left:464px;top:990px;font-size:24px;color:#fff">S</div>
<div class="a" style="left:478px;top:1007px;width:11px;height:11px;border-radius:50%;background:#fff;border:2px solid #8ad040"></div>
<div class="a t" style="left:493.48px;top:997.00px;font-size:13.24px;color:#fff;transform:scaleX(0.870);transform-origin:0 0;text-shadow:0 0 4px rgba(0,0,0,.6)">Skype</div>
<div class="a" style="left:545px;top:985px;width:181px;height:38px;border-radius:3px;background:linear-gradient(rgba(255,255,255,.28),rgba(255,255,255,.12) 45%,rgba(255,255,255,.05) 50%,rgba(255,255,255,.12));border:1px solid rgba(200,225,245,.65);box-shadow:inset 0 0 0 1px rgba(0,20,50,.35)"></div>
<div class="a" style="left:565px;top:991px;width:14px;height:26px;background:#fff;border:1px solid #1d7044;background-image:repeating-linear-gradient(#fff 0 3px,#1d7044 3px 4px)"></div>
<div class="a" style="left:553px;top:989px;width:18px;height:30px;background:#1d6e42;clip-path:polygon(0 10%,100% 0,100% 100%,0 90%)"></div>
<div class="a t b" style="left:557px;top:997px;font-size:14px;color:#fff">X</div>
<div class="a" style="left:656px;top:991px;width:14px;height:26px;background:#fff;border:1px solid #1d7044;background-image:repeating-linear-gradient(#fff 0 3px,#1d7044 3px 4px)"></div>
<div class="a" style="left:644px;top:989px;width:18px;height:30px;background:#1d6e42;clip-path:polygon(0 10%,100% 0,100% 100%,0 90%)"></div>
<div class="a t b" style="left:648px;top:997px;font-size:14px;color:#fff">X</div>
<div class="a" style="left:635px;top:987px;width:1px;height:34px;background:rgba(0,20,50,.35)"></div>
<div class="a t" style="left:586.33px;top:997.00px;font-size:13.71px;color:#fff;transform:scaleX(0.971);transform-origin:0 0;text-shadow:0 0 4px rgba(0,0,0,.6)">Conn...</div>
<div class="a t" style="left:678.10px;top:997.00px;font-size:13.91px;color:#fff;transform:scaleX(0.805);transform-origin:0 0;text-shadow:0 0 4px rgba(0,0,0,.6)">FBEs_...</div>
<div class="a" style="left:730px;top:985px;width:89px;height:38px;border-radius:3px;background:linear-gradient(rgba(255,255,255,.28),rgba(255,255,255,.12) 45%,rgba(255,255,255,.05) 50%,rgba(255,255,255,.12));border:1px solid rgba(200,225,245,.65);box-shadow:inset 0 0 0 1px rgba(0,20,50,.35)"></div>
<div class="a" style="left:738px;top:994px;width:28px;height:22px;border-radius:50%;background:#e8eef4;border:1px solid #9ab"></div>
<div class="a" style="left:743px;top:999px;width:5px;height:5px;border-radius:50%;background:#e03030"></div>
<div class="a" style="left:749px;top:997px;width:5px;height:5px;border-radius:50%;background:#f0c020"></div>
<div class="a" style="left:755px;top:999px;width:5px;height:5px;border-radius:50%;background:#40b040"></div>
<div class="a" style="left:743px;top:1005px;width:5px;height:5px;border-radius:50%;background:#3070e0"></div>
<div class="a" style="left:758px;top:990px;width:3px;height:30px;background:#d89040;transform:rotate(25deg)"></div>
<div class="a t" style="left:772.06px;top:997.00px;font-size:13.24px;color:#fff;transform:scaleX(0.949);transform-origin:0 0;text-shadow:0 0 4px rgba(0,0,0,.6)">Untitl...</div>
<div class="a" style="left:823px;top:985px;width:89px;height:38px;border-radius:3px;background:linear-gradient(rgba(255,255,255,.28),rgba(255,255,255,.12) 45%,rgba(255,255,255,.05) 50%,rgba(255,255,255,.12));border:1px solid rgba(200,225,245,.65);box-shadow:inset 0 0 0 1px rgba(0,20,50,.35)"></div>
<div class="a" style="left:830px;top:990px;width:24px;height:30px;background:linear-gradient(90deg,#e8c860,#f8e8a0);border-radius:2px;border:1px solid #b89840;transform:skewY(-8deg)"></div>
<div class="a t" style="left:867.23px;top:997.00px;font-size:13.91px;color:#fff;transform:scaleX(0.687);transform-origin:0 0;text-shadow:0 0 4px rgba(0,0,0,.6)">FEBs t...</div>
<div class="a" style="left:923px;top:998px;width:14px;height:14px;border-radius:45% 55% 45% 55%;background:#f4f8d0;box-shadow:0 0 2px 1px #a8e040;transform:rotate(-20deg)"></div>
<div class="a" style="left:947px;top:997px;width:13px;height:15px;border-radius:2px;background:linear-gradient(#40a8f0,#1a70d0)"></div>
<div class="a" style="left:948px;top:999px;width:10px;height:10px;border-radius:50%;background:#fff"></div>
<svg class="a" style="left:948px;top:1000px" width="10" height="8" viewBox="0 0 10 8"><path d="M1 4L3.5 1.5V3H6.5V1.5L9 4L6.5 6.5V5H3.5V6.5Z" fill="#1a70d0"/></svg>
<div class="a" style="left:970px;top:997px;width:16px;height:16px;background:#5aa83a;border:1px solid #90d070"></div>
<svg class="a" style="left:972px;top:999px" width="12" height="12" viewBox="0 0 12 12"><path d="M6 0.5L11 2V6C11 9 8.5 11 6 11.5C3.5 11 1 9 1 6V2Z" fill="#e8f0e0"/><path d="M6 1V11.5M1 5.5H11" stroke="#5aa83a" stroke-width="1.3"/></svg>
<svg class="a" style="left:994px;top:997px" width="16" height="16" viewBox="0 0 16 16"><circle cx="8" cy="8" r="6.5" fill="#2a8a8a" stroke="#000" stroke-width="1.2" stroke-dasharray="2 1"/><path d="M1 14L6 9L8 11L15 3" stroke="#f0f020" stroke-width="1.6" fill="none"/><rect x="7" y="5" width="2" height="10" fill="#c09040"/></svg>
<svg class="a" style="left:1018px;top:998px" width="16" height="15" viewBox="0 0 16 15"><path d="M4 1L8 3.5L4 6L0.5 3.5ZM12 1L15.5 3.5L12 6L8 3.5ZM4 6L8 8.5L4 11L0.5 8.5ZM12 6L15.5 8.5L12 11L8 8.5Z" fill="#f0f0f0" stroke="#707070" stroke-width=".6"/><circle cx="11" cy="10.5" r="4" fill="#e02020" stroke="#fff" stroke-width=".8"/><path d="M9.3 8.8L12.7 12.2M12.7 8.8L9.3 12.2" stroke="#fff" stroke-width="1.2"/></svg>
<div class="a" style="left:1043px;top:998px;width:15px;height:11px;background:linear-gradient(135deg,#3060a0,#0a1a30);border:1px solid #000"></div>
<div class="a" style="left:1048px;top:1009px;width:5px;height:3px;background:#222"></div>
<svg class="a" style="left:1065px;top:998px" width="17" height="15" viewBox="0 0 17 15"><path d="M9 0L16 5L12 14H9Z" fill="#80d0f0" stroke="#fff" stroke-width="1"/><path d="M1 7L6 2.5L11 7V14H1Z" fill="#e01818" stroke="#000" stroke-width=".6"/><path d="M3.5 6.5L8.5 11.5M8.5 6.5L3.5 11.5" stroke="#fff" stroke-width="1.2"/></svg>
<svg class="a" style="left:1090px;top:998px" width="16" height="15" viewBox="0 0 16 15"><circle cx="8" cy="7.5" r="7" fill="#30a030"/><path d="M3.5 7A4.5 4.5 0 0 1 11.5 4.5L12.5 2.8L13 7.5L8.8 6.5L10.5 5.3A3 3 0 0 0 5.2 7Z" fill="#f0f040"/><path d="M12.5 8A4.5 4.5 0 0 1 4.5 10.5L3.5 12.2L3 7.5L7.2 8.5L5.5 9.7A3 3 0 0 0 10.8 8Z" fill="#c0f060"/></svg>
<div class="a" style="left:1115px;top:998px;width:2px;height:15px;background:#fff"></div>
<div class="a" style="left:1117px;top:998px;width:13px;height:8px;background:linear-gradient(90deg,#fff,#e0e8f0);clip-path:polygon(0 0,55% 0,60% 30%,100% 30%,80% 100%,0 100%)"></div>
<svg class="a" style="left:1138px;top:997px" width="16" height="16" viewBox="0 0 16 16"><path d="M1 1V5H4V1M2.5 5V14" stroke="#fff" stroke-width="1.2" fill="none"/><rect x="5" y="3.5" width="10" height="8" fill="#1a3a60" stroke="#fff" stroke-width="1.3"/><path d="M8 14H13M10.5 11.5V14" stroke="#fff" stroke-width="1.3"/></svg>
<svg class="a" style="left:1162px;top:997px" width="16" height="16" viewBox="0 0 16 16"><path d="M1 5.5H3.5L7 2V14L3.5 10.5H1Z" fill="#f4f4f4" stroke="#c0c8d0" stroke-width=".5"/><path d="M9.5 5.5Q11 8 9.5 10.5M11.5 3.8Q14 8 11.5 12.2" stroke="#f0f0f0" stroke-width="1.1" fill="none"/></svg>
<div class="a t" style="left:1210.14px;top:991.00px;font-size:12.71px;color:#fff;transform:scaleX(0.907);transform-origin:0 0;">15:28</div>
<div class="a t" style="left:1194.81px;top:1007.00px;font-size:13.10px;color:#fff;transform:scaleX(0.899);transform-origin:0 0;">29/09/2015</div>
<div class="a" style="left:1266px;top:984px;width:14px;height:40px;background:linear-gradient(90deg,#3a6a9a,#5a88b8);border-left:1px solid #8ab0d0"></div>
</body></html>
